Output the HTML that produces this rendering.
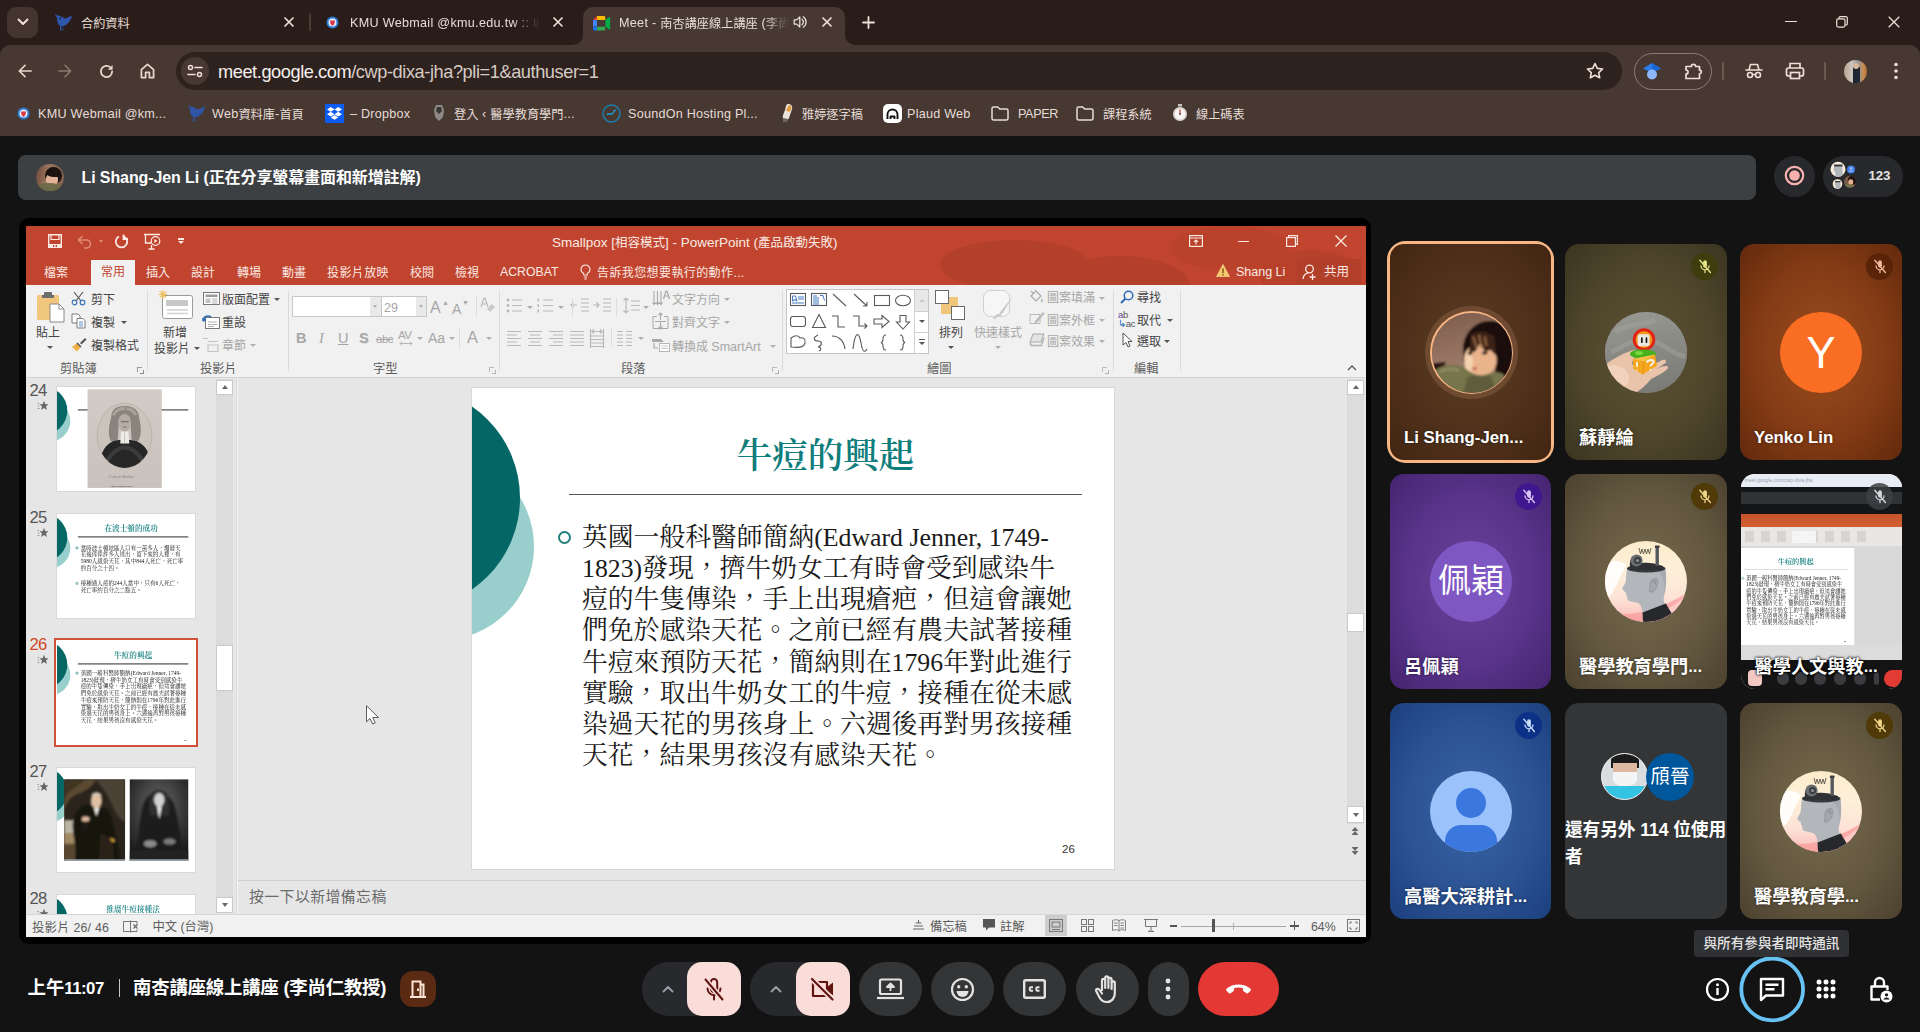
<!DOCTYPE html>
<html lang="zh-Hant">
<head>
<meta charset="utf-8">
<title>Meet - 南杏講座線上講座 (李尚仁教授)</title>
<style>
*{box-sizing:border-box;margin:0;padding:0}
html,body{width:1920px;height:1032px;overflow:hidden;background:#131314}
body{position:relative;font-family:"Liberation Sans","Noto Sans CJK TC",sans-serif;color:#e8eaed}
.abs{position:absolute}
svg{display:block;overflow:visible}
/* ---------- browser chrome ---------- */
#tabstrip{position:absolute;left:0;top:0;width:1920px;height:60px;background:#2a1d19}
#toolbar{position:absolute;left:0;top:45px;width:1920px;height:91px;background:#473832;border-radius:10px 10px 0 0}
.tabtxt{position:absolute;top:13px;font-size:12.6px;line-height:20px;color:#e6dcd6;white-space:nowrap;letter-spacing:.3px}
.c{font-size:12.2px;letter-spacing:0;position:relative;top:.5px}
.bm{position:absolute;top:104px;font-size:12.6px;line-height:20px;color:#e6dcd6;white-space:nowrap;letter-spacing:.25px}
#omni{position:absolute;left:176px;top:52px;width:1446px;height:38px;border-radius:19px;background:#2e221f}
#url{position:absolute;left:218px;top:59.5px;font-size:18.2px;line-height:24px;color:#f6efeb;white-space:nowrap;letter-spacing:-.42px}
/* ---------- meet ---------- */
#pbar{position:absolute;left:18px;top:155px;width:1738px;height:45px;border-radius:8px;background:#3c4043}
#pname{position:absolute;left:81.5px;top:166px;font-size:16px;line-height:24px;font-weight:bold;color:#fff;white-space:nowrap;letter-spacing:-.1px}
#share{position:absolute;left:19px;top:218px;width:1352px;height:726px;border-radius:10px;background:#000}
#ppt{position:absolute;left:26px;top:226px;width:1339.500px;height:711px;background:#e6e6e6;overflow:hidden;font-family:"Liberation Sans","Noto Sans CJK TC",sans-serif}
.tile{position:absolute;width:162px;height:215.500px;border-radius:14px;overflow:hidden}
.tname{position:absolute;left:14px;bottom:10px;font-size:16.8px;line-height:24px;font-weight:bold;color:#fff;white-space:nowrap;text-shadow:0 0 3px rgba(0,0,0,.5)}
.mute{position:absolute;right:9px;top:9px;width:27px;height:27px;border-radius:50%}
.av{position:absolute;left:40px;top:67.500px;width:82px;height:81px;border-radius:50%;overflow:hidden}
.cbtn{position:absolute;top:965px;height:48px;border-radius:24px;background:#333537}

#pw{position:absolute;left:-26px;top:-226px;width:1920px;height:1032px}
.pt{position:absolute;margin-top:1px;font-size:12px;line-height:16px;white-space:nowrap;color:#444}
.pt.w{color:#fbe9e4}
.pt.d{color:#a6a6a6}
.pt.g{color:#5c5c5c}
.sep{position:absolute;top:291px;width:1px;height:80px;background:#dadada}
.dd{position:absolute;width:0;height:0;border-left:3px solid transparent;border-right:3px solid transparent;border-top:3px solid #555}
.dd.d{border-top-color:#b0b0b0}
.lau{position:absolute;top:366.500px;width:5px;height:5px;border-left:1px solid #9a9a9a;border-top:1px solid #9a9a9a}
.lau:after{content:"";position:absolute;left:2px;top:2px;width:3px;height:3px;border-right:1.500px solid #8a8a8a;border-bottom:1.500px solid #8a8a8a}

.serif{font-family:"Liberation Serif","Noto Serif CJK TC","Noto Serif CJK SC",serif}
.slide{position:absolute;width:642px;height:481px;background:#fff;overflow:hidden}
.thumb{position:absolute;left:56.500px;width:138px;height:104px;overflow:hidden;background:#fff;outline:1px solid #d9d9d9}
.thumb .slide{left:0;top:0;transform:scale(.2152);transform-origin:0 0}
.tn{position:absolute;left:29.500px;margin-top:1px;font-size:16.600px;line-height:18px;color:#555;letter-spacing:-.7px}
.deco1{position:absolute;left:-174px;top:-1px;width:222px;height:222px;border-radius:50%;background:#056666}
.deco2{position:absolute;left:-125px;top:65px;width:187px;height:187px;border-radius:50%;background:#98cfcc}
.stitle{position:absolute;left:97px;top:40.500px;width:513px;text-align:center;font-size:35.500px;line-height:54px;font-weight:600;color:#0f7d7c;white-space:nowrap}
.sline{position:absolute;left:97px;top:105.500px;width:513px;height:1.500px;background:#555}
.sbody{position:absolute;left:110px;font-size:25.800px;line-height:31.150px;color:#1a1a1a;white-space:nowrap}
.sbul{position:absolute;left:86.300px;width:13px;height:13px;border-radius:50%;border:2px solid #1f7c7b}
.star{position:absolute;left:37px;width:12px;height:12px}
.sbtn{position:absolute;background:#fff;border:1px solid #c9c9c9}
.thumb .sline{height:5px;top:104px;background:#3a3a3a}
.thumb .sbul{border-width:3px}
</style>
</head>
<body>
<!-- ================= BROWSER CHROME ================= -->
<div id="tabstrip"></div>
<div id="toolbar"></div>
<div id="omni"></div>

<!-- tab search -->
<div class="abs" style="left:7px;top:7px;width:31px;height:31px;border-radius:9px;background:#43342e"></div>
<svg class="abs" style="left:17px;top:18px" width="12" height="8" viewBox="0 0 12 8"><path d="M1.5 1.5L6 6l4.5-4.5" fill="none" stroke="#efdfd8" stroke-width="2" stroke-linecap="round" stroke-linejoin="round"/></svg>
<!-- tab 1 -->
<svg class="abs" style="left:54px;top:13px" width="19" height="19" viewBox="0 0 19 19"><path d="M.5.800L5 3.500C7 3 9 4.300 10.500 6L18 2.500C17.500 6 15.500 9.500 12.500 11.500 11 13 8.500 13.500 7.500 13.200L7.200 17.500H5.800L6.100 12.800C3.500 11.500 3 8 3.500 5.500z" fill="#2f55a8"/><ellipse cx="8" cy="8.300" rx="4.600" ry="4" transform="rotate(25 8 8.300)" fill="#2f55a8"/><circle cx="5" cy="4.800" r="2.200" fill="#2f55a8"/><path d="M9 13l.5 4.500h-1.200z" fill="#2f55a8"/><circle cx="6" cy="5.5" r=".8" fill="#111"/></svg>
<div class="tabtxt" style="left:81px"><span class="c">合約資料</span></div>
<svg class="abs" style="left:284px;top:17px" width="10" height="10" viewBox="0 0 10 10"><path d="M1 1l8 8M9 1l-8 8" stroke="#efdfd8" stroke-width="1.7" stroke-linecap="round"/></svg>
<div class="abs" style="left:309px;top:13px;width:2px;height:18px;background:#4a3a33;border-radius:1px"></div>
<!-- tab 2 -->
<svg class="abs" style="left:326px;top:16px" width="13" height="13" viewBox="0 0 13 13"><circle cx="6.5" cy="6.5" r="6" fill="#2d7bd6"/><circle cx="6.5" cy="6.5" r="4" fill="#e9eef6"/><path d="M4 4.5h5l-.6 3.5L6.5 10 4.600 8z" fill="#d8344a"/></svg>
<div class="tabtxt" style="left:350px;width:190px;overflow:hidden;-webkit-mask-image:linear-gradient(90deg,#000 85%,transparent)">KMU Webmail @kmu.edu.tw :: <span class="c">收信</span></div>
<svg class="abs" style="left:553px;top:17px" width="10" height="10" viewBox="0 0 10 10"><path d="M1 1l8 8M9 1l-8 8" stroke="#efdfd8" stroke-width="1.7" stroke-linecap="round"/></svg>
<!-- active tab -->
<div class="abs" style="left:583px;top:7px;width:261.500px;height:40px;border-radius:10px 10px 0 0;background:#473832"></div>
<svg class="abs" style="left:573px;top:35px" width="10" height="10"><path d="M10 0v10H0A10 10 0 0 0 10 0z" fill="#473832"/></svg>
<svg class="abs" style="left:844.500px;top:35px" width="10" height="10"><path d="M0 0v10h10A10 10 0 0 1 0 0z" fill="#473832"/></svg>
<svg class="abs" style="left:592.800px;top:15.800px" width="17.200" height="14.500" viewBox="0 0 19 16"><path d="M0 4.500L4.500 0v4.500z" fill="#ea4335"/><path d="M4.500 0H12a1.500 1.500 0 0 1 1.500 1.500V4.500h-9z" fill="#fbbc04"/><path d="M0 4.500h4.500v7H0z" fill="#4285f4"/><path d="M0 11.500h4.500V16H1.500A1.500 1.500 0 0 1 0 14.500z" fill="#1a73e8"/><path d="M4.500 11.500h9v3A1.500 1.500 0 0 1 12 16H4.500z" fill="#34a853"/><path d="M13.500 4.500L17.600 1.300c.6-.5 1.400-.1 1.400.7v12c0 .8-.8 1.200-1.400.7l-4.100-3.200z" fill="#00ac47"/><path d="M13.500 4.500v7l-3-3.500z" fill="#00832d"/><rect x="4.500" y="4.500" width="9" height="7" fill="#473832"/></svg>
<div class="tabtxt" style="left:619px;width:170px;overflow:hidden;-webkit-mask-image:linear-gradient(90deg,#000 86%,transparent)">Meet - <span class="c">南杏講座線上講座</span> (<span class="c">李尚仁</span></div>
<svg class="abs" style="left:793px;top:15px" width="15" height="14" viewBox="0 0 15 14"><path d="M1.200 4.900h2.500L6.800 2v10L3.700 9.100H1.200z" fill="none" stroke="#e6dcd6" stroke-width="1.300" stroke-linejoin="round"/><path d="M9 4.200a3.500 3.500 0 0 1 0 5.600M10.300 1.800a6.300 6.300 0 0 1 0 10.400" fill="none" stroke="#e6dcd6" stroke-width="1.300" stroke-linecap="round"/></svg>
<svg class="abs" style="left:822px;top:17px" width="10" height="10" viewBox="0 0 10 10"><path d="M1 1l8 8M9 1l-8 8" stroke="#efdfd8" stroke-width="1.700" stroke-linecap="round"/></svg>
<svg class="abs" style="left:862px;top:16px" width="13" height="13" viewBox="0 0 13 13"><path d="M6.500 1v11M1 6.500h11" stroke="#efdfd8" stroke-width="1.800" stroke-linecap="round"/></svg>
<!-- window controls -->
<div class="abs" style="left:1785px;top:20.500px;width:12px;height:1.200px;background:#efdfd8"></div>
<svg class="abs" style="left:1836px;top:16px" width="12" height="12" viewBox="0 0 12 12"><rect x=".7" y="2.800" width="8.300" height="8.300" rx="1.500" fill="none" stroke="#efdfd8" stroke-width="1.200"/><path d="M3 2.800V2a1.300 1.300 0 0 1 1.300-1.300H10A1.300 1.300 0 0 1 11.300 2v5.700A1.300 1.300 0 0 1 10 9H9" fill="none" stroke="#efdfd8" stroke-width="1.200"/></svg>
<svg class="abs" style="left:1888px;top:16px" width="12" height="12" viewBox="0 0 12 12"><path d="M.7.700l10.600 10.600M11.300.700L.7 11.300" stroke="#efdfd8" stroke-width="1.300"/></svg>
<!-- nav buttons -->
<svg class="abs" style="left:18px;top:64px" width="14" height="14" viewBox="0 0 16 16"><path d="M15 8H2M8 1.500L1.500 8 8 14.500" fill="none" stroke="#e9d6cd" stroke-width="1.900" stroke-linejoin="round" stroke-linecap="round"/></svg>
<svg class="abs" style="left:58px;top:64px" width="14" height="14" viewBox="0 0 16 16"><path d="M1 8h13M8 1.500L14.500 8 8 14.500" fill="none" stroke="#8a7a72" stroke-width="1.800" stroke-linejoin="round" stroke-linecap="round"/></svg>
<svg class="abs" style="left:98.500px;top:63.500px" width="15" height="15" viewBox="0 0 16 16"><path d="M14 8a6 6 0 1 1-1.800-4.300" fill="none" stroke="#e9d6cd" stroke-width="1.900" stroke-linecap="round"/><path d="M14.500 1v5h-5z" fill="#e9d6cd"/></svg>
<svg class="abs" style="left:139.500px;top:63px" width="15" height="16" viewBox="0 0 16 17"><path d="M1.500 7L8 1.500 14.500 7v8.500h-4.500v-5.500h-4v5.500H1.500z" fill="none" stroke="#e9d6cd" stroke-width="1.900" stroke-linejoin="round"/></svg>
<!-- site info -->
<div class="abs" style="left:181px;top:57px;width:28px;height:28px;border-radius:14px;background:#473832"></div>
<svg class="abs" style="left:187px;top:64px" width="16" height="14" viewBox="0 0 16 14"><circle cx="3.500" cy="3.500" r="2" fill="none" stroke="#efdfd8" stroke-width="1.500"/><path d="M8 3.500h7" stroke="#efdfd8" stroke-width="1.600" stroke-linecap="round"/><circle cx="12.500" cy="10.500" r="2" fill="none" stroke="#efdfd8" stroke-width="1.500"/><path d="M1 10.500h7" stroke="#efdfd8" stroke-width="1.600" stroke-linecap="round"/></svg>
<!-- star -->
<svg class="abs" style="left:1586px;top:62px" width="18" height="17" viewBox="0 0 18 17"><path d="M9 1.500l2.300 4.900 5.300.6-3.900 3.600 1 5.200L9 13.200l-4.700 2.600 1-5.200L1.400 7l5.300-.6z" fill="none" stroke="#efdfd8" stroke-width="1.600" stroke-linejoin="round"/></svg>
<!-- extension pill -->
<div class="abs" style="left:1634px;top:53px;width:78px;height:37px;border-radius:18.500px;border:1px solid #8c7e77"></div>
<svg class="abs" style="left:1642px;top:61px" width="20" height="20" viewBox="0 0 20 20"><path d="M1 7.500L10 2l9 5.500-9 4.500z" fill="#2b7de9"/><path d="M10 2l9 5.500-9 4.500z" fill="#1b66d2"/><circle cx="10" cy="13.500" r="5" fill="#8cb7f9"/></svg>
<svg class="abs" style="left:1684px;top:61px" width="19" height="19" viewBox="0 0 19 19"><path d="M2 5.500H7.300a2.200 2.200 0 1 1 4.400 0H15.500V9.200a1.800 1.800 0 1 1 0 3.600V17.500H2V13a2 2 0 1 0 0-4z" fill="none" stroke="#efdfd8" stroke-width="1.700" stroke-linejoin="round"/></svg>
<div class="abs" style="left:1722px;top:62px;width:2px;height:18px;background:#6a5a52;border-radius:1px"></div>
<svg class="abs" style="left:1744px;top:62px" width="20" height="18" viewBox="0 0 20 18"><path d="M2 8h16M5 8l1.500-5.500h7L15 8" fill="none" stroke="#efdfd8" stroke-width="1.600" stroke-linejoin="round" stroke-linecap="round"/><circle cx="6" cy="13" r="2.500" fill="none" stroke="#efdfd8" stroke-width="1.600"/><circle cx="14" cy="13" r="2.500" fill="none" stroke="#efdfd8" stroke-width="1.600"/><path d="M8.500 12.500h3" stroke="#efdfd8" stroke-width="1.400"/></svg>
<svg class="abs" style="left:1785px;top:62px" width="20" height="18" viewBox="0 0 20 18"><path d="M5 6V1.500h10V6" fill="none" stroke="#efdfd8" stroke-width="1.700"/><rect x="1.500" y="6" width="17" height="8" rx="2" fill="none" stroke="#efdfd8" stroke-width="1.700"/><rect x="5.500" y="10.500" width="9" height="6" fill="#473832" stroke="#efdfd8" stroke-width="1.700"/></svg>
<div class="abs" style="left:1824px;top:62px;width:2px;height:18px;background:#6a5a52;border-radius:1px"></div>
<div class="abs" style="left:1844px;top:60px;width:23px;height:23px;border-radius:50%;overflow:hidden;background:linear-gradient(90deg,#b9a48f 0%,#cfc6bd 35%,#8f999f 60%,#c98a4e 85%,#b5703a 100%)"><div class="abs" style="left:9px;top:7px;width:7px;height:16px;background:#1c2733"></div><div class="abs" style="left:9px;top:3px;width:6px;height:6px;border-radius:3px;background:#d9b89b"></div></div>
<svg class="abs" style="left:1894px;top:62px" width="4" height="18" viewBox="0 0 4 18"><circle cx="2" cy="2.500" r="1.800" fill="#efdfd8"/><circle cx="2" cy="9" r="1.800" fill="#efdfd8"/><circle cx="2" cy="15.500" r="1.800" fill="#efdfd8"/></svg>
<!-- bookmarks -->
<svg class="abs" style="left:17px;top:107px" width="13" height="13" viewBox="0 0 13 13"><circle cx="6.500" cy="6.500" r="6" fill="#2d7bd6"/><circle cx="6.500" cy="6.500" r="4" fill="#e9eef6"/><path d="M4 4.500h5l-.6 3.500L6.500 10 4.600 8z" fill="#d8344a"/></svg>
<div class="bm" style="left:38px">KMU Webmail @km...</div>
<svg class="abs" style="left:187px;top:104px" width="19" height="19" viewBox="0 0 19 19"><path d="M.5.800L5 3.500C7 3 9 4.300 10.500 6L18 2.500C17.500 6 15.500 9.500 12.500 11.500 11 13 8.500 13.500 7.500 13.200L7.200 17.500H5.800L6.100 12.800C3.500 11.500 3 8 3.500 5.500z" fill="#2f55a8"/><ellipse cx="8" cy="8.300" rx="4.600" ry="4" transform="rotate(25 8 8.300)" fill="#2f55a8"/><circle cx="5" cy="4.800" r="2.200" fill="#2f55a8"/><path d="M9 13l.5 4.500h-1.200z" fill="#2f55a8"/></svg>
<div class="bm" style="left:212px">Web<span class="c">資料庫</span>-<span class="c">首頁</span></div>
<div class="abs" style="left:325px;top:104px;width:19px;height:19px;background:#0d5cf2"></div>
<svg class="abs" style="left:327px;top:107px" width="15" height="13" viewBox="0 0 15 13"><path d="M3.800 0L0 2.400l3.800 2.400 3.700-2.400zM11.200 0L7.500 2.400l3.700 2.400L15 2.400zM0 7.200l3.800 2.400 3.700-2.400-3.700-2.400zM11.200 4.800L7.500 7.200l3.700 2.400L15 7.200zM3.800 10.400l3.700 2.400 3.700-2.400-3.700-2.400z" fill="#fff"/></svg>
<div class="bm" style="left:350px">– Dropbox</div>
<svg class="abs" style="left:433px;top:104px" width="12" height="18" viewBox="0 0 12 18"><path d="M3 1h6l2 5-1 7-4 4-4-4-1-7z" fill="#8d8a86"/><path d="M4 3h4l1 4-3 3-3-3z" fill="#3a3836"/></svg>
<div class="bm" style="left:454px"><span class="c">登入</span> ‹ <span class="c">醫學教育學門</span>...</div>
<svg class="abs" style="left:602px;top:104px" width="19" height="19" viewBox="0 0 19 19"><circle cx="9.500" cy="9.500" r="8.500" fill="none" stroke="#1c7fb0" stroke-width="1.500"/><path d="M5 11c2-4 4 2 6-2s2-2 3-3" fill="none" stroke="#1c9fd0" stroke-width="1.500"/></svg>
<div class="bm" style="left:628px">SoundOn Hosting Pl...</div>
<svg class="abs" style="left:780px;top:103px" width="14" height="20" viewBox="0 0 14 20"><path d="M8 1c3 0 5 2 4 5l-3 9c-1 3-5 3-6 1-1-3 1-6 2-9S6 1 8 1z" fill="#e9e3da"/><path d="M9 2c2 0 3 2 2 4L9.500 9 6 7.500z" fill="#e39a3b"/><path d="M3 15l5 1-1 3H3z" fill="#6a6660"/></svg>
<div class="bm" style="left:802px"><span class="c">雅婷逐字稿</span></div>
<div class="abs" style="left:883px;top:104px;width:19px;height:19px;border-radius:5px;background:#fff"></div>
<svg class="abs" style="left:886px;top:108px" width="13" height="12" viewBox="0 0 13 12"><path d="M1.500 11V6.500a5 5 0 0 1 10 0V11M4.500 11V8.500h4V11" fill="none" stroke="#111" stroke-width="1.900" stroke-linejoin="round"/></svg>
<div class="bm" style="left:907px">Plaud Web</div>
<svg class="abs" style="left:991px;top:106px" width="18" height="15" viewBox="0 0 18 15"><path d="M1 2.500A1.500 1.500 0 0 1 2.500 1h4.200l2 2H15.500A1.500 1.500 0 0 1 17 4.500v8A1.500 1.500 0 0 1 15.500 14h-13A1.500 1.500 0 0 1 1 12.500z" fill="none" stroke="#e6dcd6" stroke-width="1.500"/></svg>
<div class="bm" style="left:1018px;letter-spacing:-.35px">PAPER</div>
<svg class="abs" style="left:1076px;top:106px" width="18" height="15" viewBox="0 0 18 15"><path d="M1 2.500A1.500 1.500 0 0 1 2.500 1h4.200l2 2H15.500A1.500 1.500 0 0 1 17 4.500v8A1.500 1.500 0 0 1 15.500 14h-13A1.500 1.500 0 0 1 1 12.500z" fill="none" stroke="#e6dcd6" stroke-width="1.500"/></svg>
<div class="bm" style="left:1103px"><span class="c">課程系統</span></div>
<svg class="abs" style="left:1172px;top:104px" width="16" height="18" viewBox="0 0 16 18"><rect x="6" y="0" width="4" height="2.500" fill="#c9c4bf"/><circle cx="8" cy="10" r="7" fill="#d9d6d2"/><circle cx="8" cy="10" r="5.300" fill="#f7f5f3"/><path d="M8 10V5.500" stroke="#c0392b" stroke-width="1.200"/><circle cx="8" cy="10" r="1" fill="#555"/></svg>
<div class="bm" style="left:1196px"><span class="c">線上碼表</span></div>
<div id="url">meet.google.com<span style="color:#d6cbc4">/cwp-dixa-jha?pli=1&amp;authuser=1</span></div>

<!-- ================= MEET ================= -->
<div id="pbar"></div>
<div class="abs" style="left:36px;top:163.500px;width:27.500px;height:27.500px;border-radius:50%;overflow:hidden;background:linear-gradient(100deg,#6d4636 0%,#9a7560 40%,#7c5a4a 100%)">
 <div class="abs" style="left:9px;top:3px;width:17px;height:17px;border-radius:50%;background:#1b120e"></div>
 <div class="abs" style="left:10px;top:9px;width:12px;height:13px;border-radius:45%;background:#e2b197"></div>
 <div class="abs" style="left:10px;top:5px;width:15px;height:8px;border-radius:50% 50% 30% 60%;background:#1b120e"></div>
 <div class="abs" style="left:1px;top:19px;width:26px;height:12px;border-radius:40% 50% 0 0;background:#6f6a48"></div>
</div>
<div id="pname">Li Shang-Jen Li (正在分享螢幕畫面和新增註解)</div>
<div id="share"></div>
<div id="ppt">
<div id="pw">
<!-- title bar -->
<div class="abs" style="left:26px;top:226px;width:1340px;height:59px;background:#c1452e"></div>
<div class="abs" style="left:900px;top:226px;width:466px;height:59px;overflow:hidden;opacity:.55">
 <div class="abs" style="left:40px;top:14px;width:150px;height:50px;border-radius:50%;background:#a93c28"></div>
 <div class="abs" style="left:150px;top:30px;width:140px;height:60px;border-radius:50%;background:#ab3d29"></div>
 <div class="abs" style="left:270px;top:0;width:120px;height:44px;border-radius:50%;background:#b5402a"></div>
 <div class="abs" style="left:360px;top:24px;width:100px;height:50px;border-radius:50%;background:#b03f2a"></div>
</div>
<!-- QAT -->
<svg class="abs" style="left:47.500px;top:233.500px" width="14" height="14" viewBox="0 0 14 14"><path d="M.7.700h12.600v12.600H.7z" fill="none" stroke="#fbe9e4" stroke-width="1.400"/><path d="M3 1v4.500h8V1" fill="none" stroke="#fbe9e4" stroke-width="1.200"/><rect x="1" y="10" width="12" height="3.500" fill="#fbe9e4"/><rect x="5" y="11" width="1.300" height="2" fill="#c1452e"/><rect x="7.700" y="11" width="1.300" height="2" fill="#c1452e"/></svg>
<svg class="abs" style="left:77px;top:235px" width="15" height="13" viewBox="0 0 15 13"><path d="M2 5h7.500a4 4 0 0 1 0 8H7" fill="none" stroke="#e08a76" stroke-width="1.600"/><path d="M5.500 1L1.500 5l4 4" fill="none" stroke="#e08a76" stroke-width="1.600"/></svg>
<div class="dd" style="left:99px;top:240px;border-top-color:#e08a76;border-width:2.500px 2.500px 0 2.500px;border-top-width:3px"></div>
<svg class="abs" style="left:114px;top:234px" width="15" height="15" viewBox="0 0 15 15"><path d="M9.500 2.300a5.700 5.700 0 1 1-4.500.2" fill="none" stroke="#fbe9e4" stroke-width="1.800"/><path d="M9.500 .5v4.500h4.500" fill="none" stroke="#fbe9e4" stroke-width="1.800"/></svg>
<svg class="abs" style="left:144px;top:233px" width="17" height="16" viewBox="0 0 17 16"><path d="M0 1.500h16M1.500 1.500v8.500h6M4.500 16h6M7.500 12v4" fill="none" stroke="#fbe9e4" stroke-width="1.300"/><circle cx="11.500" cy="8" r="4.300" fill="#c1452e" stroke="#fbe9e4" stroke-width="1.200"/><path d="M10.300 6v4l3.200-2z" fill="#fbe9e4"/></svg>
<div class="abs" style="left:178px;top:238px;width:6px;height:1.500px;background:#fbe9e4"></div>
<div class="dd" style="left:178px;top:241px;border-top-color:#fbe9e4"></div>
<div class="pt w" style="left:552px;top:233px;font-size:13.500px;line-height:18px"><span>Smallpox [</span><span style="font-size:12.500px">相容模式</span><span>] - PowerPoint (</span><span style="font-size:12.500px">產品啟動失敗</span><span>)</span></div>
<!-- window controls -->
<svg class="abs" style="left:1189px;top:235px" width="14" height="12" viewBox="0 0 14 12"><rect x=".6" y=".6" width="12.800" height="10.800" fill="none" stroke="#fbe9e4" stroke-width="1.200"/><path d="M.6 3h12.800M7 9.500V5M5 7l2-2 2 2" fill="none" stroke="#fbe9e4" stroke-width="1.100"/></svg>
<div class="abs" style="left:1238px;top:241px;width:11px;height:1.300px;background:#fbe9e4"></div>
<svg class="abs" style="left:1286px;top:235px" width="12" height="12" viewBox="0 0 12 12"><rect x=".6" y="2.600" width="8.800" height="8.800" fill="none" stroke="#fbe9e4" stroke-width="1.200"/><path d="M2.600 2.600V.6h8.800v8.800H9.400" fill="none" stroke="#fbe9e4" stroke-width="1.200"/></svg>
<svg class="abs" style="left:1335px;top:235px" width="12" height="12" viewBox="0 0 12 12"><path d="M.5.500l11 11M11.500.500l-11 11" stroke="#fbe9e4" stroke-width="1.300"/></svg>
<!-- tabs -->
<div class="abs" style="left:91px;top:260px;width:44px;height:26px;background:#f1f1f1"></div>
<div class="pt w" style="left:44px;top:264px">檔案</div>
<div class="pt" style="left:101px;top:263px;color:#c1452e">常用</div>
<div class="pt w" style="left:146px;top:264px">插入</div>
<div class="pt w" style="left:191px;top:264px">設計</div>
<div class="pt w" style="left:237px;top:264px">轉場</div>
<div class="pt w" style="left:282px;top:264px">動畫</div>
<div class="pt w" style="left:327px;top:264px;letter-spacing:.4px">投影片放映</div>
<div class="pt w" style="left:410px;top:264px">校閱</div>
<div class="pt w" style="left:455px;top:264px">檢視</div>
<div class="pt w" style="left:500px;top:262.500px;font-size:12.300px">ACROBAT</div>
<svg class="abs" style="left:580px;top:264px" width="11" height="16" viewBox="0 0 11 16"><path d="M5.500 1a4.300 4.300 0 0 1 2.300 8c-.5.400-.6 1-.6 2H3.800c0-1-.1-1.600-.6-2A4.300 4.300 0 0 1 5.500 1zM3.800 13h3.400M4.300 15h2.400" fill="none" stroke="#fbe9e4" stroke-width="1.100"/></svg>
<div class="pt w" style="left:597px;top:264px;letter-spacing:.4px">告訴我您想要執行的動作...</div>
<svg class="abs" style="left:1216px;top:264px" width="14" height="13" viewBox="0 0 14 13"><path d="M7 .5L13.500 12.500H.5z" fill="#f6c86a" stroke="#f9e0a8" stroke-width=".6"/><rect x="6.300" y="4.500" width="1.400" height="4.500" fill="#7a4a10"/><rect x="6.300" y="10" width="1.400" height="1.400" fill="#7a4a10"/></svg>
<div class="pt w" style="left:1236px;top:263px;font-size:12.500px">Shang Li</div>
<div class="abs" style="left:1297px;top:259px;width:64px;height:25px;background:#b23f29"></div>
<svg class="abs" style="left:1302px;top:264px" width="15" height="16" viewBox="0 0 15 16"><circle cx="7.500" cy="5" r="3.800" fill="none" stroke="#fbe9e4" stroke-width="1.300"/><path d="M1 15c.5-4 3-5.500 5-5.800M10.500 10v6M7.500 13h6" fill="none" stroke="#fbe9e4" stroke-width="1.300"/></svg>
<div class="pt w" style="left:1324px;top:263px;font-size:12.500px">共用</div>
<!-- ribbon body -->
<div class="abs" style="left:26px;top:285px;width:1340px;height:92px;background:#f1f1f1"></div>
<div class="abs" style="left:26px;top:377px;width:1340px;height:1px;background:#d4d4d4"></div>
<div class="sep" style="left:147px"></div><div class="sep" style="left:288px"></div><div class="sep" style="left:499px"></div><div class="sep" style="left:782px"></div><div class="sep" style="left:1113px"></div><div class="sep" style="left:1180px"></div>
<!-- clipboard -->
<svg class="abs" style="left:36px;top:291px" width="30" height="32" viewBox="0 0 30 32"><rect x="1" y="4" width="22" height="25" rx="1.500" fill="#f0c67c"/><rect x="8" y="1" width="8" height="5" rx="1" fill="#6e6e6e"/><rect x="6" y="4" width="12" height="3" fill="#6e6e6e"/><path d="M14 13h9l5 5v13H14z" fill="#fff" stroke="#8a8a8a" stroke-width="1"/><path d="M23 13v5h5" fill="none" stroke="#8a8a8a" stroke-width="1"/></svg>
<div class="pt" style="left:36px;top:324px">貼上</div>
<div class="dd" style="left:47px;top:346px"></div>
<svg class="abs" style="left:71px;top:291px" width="15" height="15" viewBox="0 0 15 15"><path d="M3 1l7 9M12 1L5 10" stroke="#5a5a5a" stroke-width="1.200"/><circle cx="3.500" cy="11.500" r="2.300" fill="none" stroke="#3b73b9" stroke-width="1.200"/><circle cx="11.500" cy="11.500" r="2.300" fill="none" stroke="#3b73b9" stroke-width="1.200"/></svg>
<div class="pt" style="left:91px;top:291px">剪下</div>
<svg class="abs" style="left:71px;top:313px" width="15" height="16" viewBox="0 0 15 16"><path d="M1 1h6l2 2v7H1z" fill="#fff" stroke="#7a7a7a"/><path d="M6 5.500h6l2 2V15H6z" fill="#fff" stroke="#7a7a7a"/><path d="M8 9h4M8 11h4M8 13h4" stroke="#3b73b9" stroke-width=".8"/></svg>
<div class="pt" style="left:91px;top:314px">複製</div>
<div class="dd" style="left:121px;top:321px"></div>
<svg class="abs" style="left:71px;top:337px" width="16" height="15" viewBox="0 0 16 15"><path d="M9 6l5-5 1.500 1.500-5 5z" fill="#555"/><path d="M1 10l5-4 4 4-4 4.500z" fill="#f0b04a"/><path d="M6 6l4 4" stroke="#555" stroke-width="1.500"/></svg>
<div class="pt" style="left:91px;top:337px">複製格式</div>
<div class="pt g" style="left:60px;top:359.5px;font-size:12.300px">剪貼簿</div>
<div class="lau" style="left:137px"></div>
<!-- slides -->
<svg class="abs" style="left:158px;top:290px" width="36" height="30" viewBox="0 0 36 30"><rect x="4.500" y="5.500" width="30" height="23" rx="2" fill="#fff" stroke="#9a9a9a"/><rect x="8" y="10" width="22" height="6" fill="#c8c8c8"/><path d="M9 20h21M9 23.500h21" stroke="#d0d0d0" stroke-width="1.500"/><path d="M5 0v9M.5 4.500h9M1.800 1.300l6.400 6.400M8.200 1.300L1.800 7.700" stroke="#efc05a" stroke-width="1.200"/></svg>
<div class="pt" style="left:163px;top:324px">新增</div>
<div class="pt" style="left:154px;top:340px">投影片</div>
<div class="dd" style="left:194px;top:347px"></div>
<svg class="abs" style="left:203px;top:292px" width="17" height="13" viewBox="0 0 17 13"><rect x=".5" y=".5" width="16" height="12" fill="#fff" stroke="#777"/><rect x="2.500" y="2.500" width="12" height="2.500" fill="#9a9a9a"/><rect x="2.500" y="6.500" width="5" height="4.500" fill="#c4c4c4"/><path d="M9 7h5.500M9 9h5.500M9 11h5.500" stroke="#9a9a9a" stroke-width=".8"/></svg>
<div class="pt" style="left:222px;top:291px">版面配置</div>
<div class="dd" style="left:274px;top:298px"></div>
<svg class="abs" style="left:202px;top:314px" width="18" height="15" viewBox="0 0 18 15"><rect x="3.500" y="3.500" width="14" height="11" fill="#fff" stroke="#777"/><path d="M6 8h9M6 10.500h9M6 12.500h6" stroke="#aaa" stroke-width=".9"/><path d="M1 7a5 5 0 0 1 8-4" fill="none" stroke="#2d6bb5" stroke-width="1.600"/><path d="M0 4l1.500 4 3-2.500z" fill="#2d6bb5"/></svg>
<div class="pt" style="left:222px;top:314px">重設</div>
<svg class="abs" style="left:203px;top:337px" width="16" height="15" viewBox="0 0 16 15"><path d="M0 1.500h5M5 4.500h10M5 8h10v6.500H5z" fill="none" stroke="#c4c4c4" stroke-width="1.200"/></svg>
<div class="pt d" style="left:222px;top:337px">章節</div>
<div class="dd d" style="left:250px;top:344px"></div>
<div class="pt g" style="left:200px;top:359.5px;font-size:12.300px">投影片</div>
<!-- font -->
<div class="abs" style="left:292px;top:296px;width:90px;height:21px;background:#fff;border:1px solid #c8c8c8"></div>
<div class="abs" style="left:370px;top:297px;width:11px;height:19px;background:#e9e9e9"></div>
<div class="dd d" style="left:373px;top:305px;border-width:3px 2.500px 0 2.500px"></div>
<div class="abs" style="left:381px;top:296px;width:46px;height:21px;background:#fff;border:1px solid #c8c8c8"></div>
<div class="abs" style="left:416px;top:297px;width:10px;height:19px;background:#e9e9e9"></div>
<div class="dd d" style="left:418.500px;top:305px;border-width:3px 2.500px 0 2.500px"></div>
<div class="pt d" style="left:384px;top:299px;font-size:12.500px">29</div>
<div class="pt d" style="left:430px;top:298px;font-size:16px;line-height:18px">A</div><div class="pt d" style="left:442px;top:294px;font-size:7px">▲</div>
<div class="pt d" style="left:452px;top:299px;font-size:14px;line-height:18px">A</div><div class="pt d" style="left:462px;top:294px;font-size:7px">▼</div>
<div class="abs" style="left:476px;top:296px;width:1px;height:20px;background:#dcdcdc"></div>
<svg class="abs" style="left:480px;top:297px" width="15" height="16" viewBox="0 0 15 16"><path d="M1 10L4 1h1l3 9M2 7h5" fill="none" stroke="#b9b9b9" stroke-width="1.200"/><path d="M7 12l5-5 3 3-5 5z" fill="#c9c9c9"/></svg>
<div class="pt d" style="left:296px;top:328px;font-size:14.500px;font-weight:bold;line-height:18px">B</div>
<div class="pt d" style="left:319px;top:328px;font-size:14.500px;font-style:italic;line-height:18px;font-family:'Liberation Serif',serif">I</div>
<div class="pt d" style="left:338px;top:328px;font-size:14.500px;text-decoration:underline;line-height:18px">U</div>
<div class="pt d" style="left:359px;top:328px;font-size:14.500px;font-weight:bold;line-height:18px;text-shadow:1px 1px 0 #ddd">S</div>
<div class="pt d" style="left:376px;top:330px;font-size:11.500px;text-decoration:line-through;line-height:16px;letter-spacing:-.5px">abc</div>
<div class="pt d" style="left:398px;top:327px;font-size:11.500px;line-height:14px;letter-spacing:-.5px">AV</div>
<svg class="abs" style="left:399px;top:341px" width="14" height="5" viewBox="0 0 14 5"><path d="M1 2.500h12M3 .5l-2 2 2 2M11 .5l2 2-2 2" fill="none" stroke="#b5b5b5" stroke-width="1"/></svg>
<div class="dd d" style="left:417px;top:337px"></div>
<div class="pt d" style="left:428px;top:328px;font-size:14px;line-height:18px">Aa</div>
<div class="dd d" style="left:449px;top:337px"></div>
<div class="abs" style="left:459px;top:328px;width:1px;height:20px;background:#dcdcdc"></div>
<div class="pt d" style="left:467px;top:326px;font-size:16.500px;line-height:20px">A</div>
<div class="dd d" style="left:486px;top:337px"></div>
<div class="pt g" style="left:373px;top:359.5px;font-size:12.300px">字型</div>
<div class="lau" style="left:489px;opacity:.6"></div>
<!-- paragraph -->
<svg class="abs" style="left:505px;top:297px" width="170" height="58" viewBox="0 0 170 58">
 <g stroke="#b9b9b9" stroke-width="1.200" fill="none">
  <path d="M7 3h10M7 8.500h10M7 14h10"/><path d="M38 3h10M38 8.500h10M38 14h10"/>
  <path d="M76 2h8M76 6h8M76 10h8M76 14h8M72 8h-6M68.500 5.500L66 8l2.500 2.500"/>
  <path d="M98 2h8M98 6h8M98 10h8M98 14h8M88 8h6M91.500 5.500L94 8l-2.500 2.500"/>
  <path d="M126 4h9M126 8.500h9M126 13h9M121 1v15M118.500 3.500L121 1l2.500 2.500M118.500 13.500L121 16l2.500-2.500"/>
  <path d="M2 34.500h14M2 38h10M2 41.500h14M2 45h10M2 48.500h14"/>
  <path d="M23 34.500h14M25 38h10M23 41.500h14M25 45h10M23 48.500h14"/>
  <path d="M44 34.500h14M48 38h10M44 41.500h14M48 45h10M44 48.500h14"/>
  <path d="M65 34.500h14M65 38h14M65 41.500h14M65 45h14M65 48.500h14"/>
  <path d="M86 39h12M86 42.500h12M86 46h12M86 49.500h12M85.500 32v19M98.500 32v19M87 34.500h10M89 32.500l-2 2 2 2M95 32.500l2 2-2 2"/>
  <path d="M112 34.500h6M121 34.500h6M112 38h6M121 38h6M112 41.500h6M121 41.500h6M112 45h6M121 45h6M112 48.500h6M121 48.500h6"/>
 </g>
 <g fill="#b9b9b9"><circle cx="3" cy="3" r="1.400"/><circle cx="3" cy="8.500" r="1.400"/><circle cx="3" cy="14" r="1.400"/><rect x="32.500" y="1.500" width="1.500" height="3"/><rect x="32.500" y="7" width="1.500" height="3"/><rect x="32.500" y="12.500" width="1.500" height="3"/></g>
</svg>
<div class="dd d" style="left:527px;top:306px"></div><div class="dd d" style="left:558px;top:306px"></div><div class="dd d" style="left:643px;top:306px"></div><div class="dd d" style="left:638px;top:337px"></div>
<div class="abs" style="left:572px;top:298px;width:1px;height:18px;background:#dcdcdc"></div><div class="abs" style="left:616px;top:298px;width:1px;height:18px;background:#dcdcdc"></div><div class="abs" style="left:611px;top:329px;width:1px;height:18px;background:#dcdcdc"></div>
<svg class="abs" style="left:652px;top:290px" width="18" height="17" viewBox="0 0 18 17"><path d="M2 1v13M5.500 1v13M9 1v13M.5 12.500L2 14.500l1.500-2M4 12.500l1.500 2 1.500-2M7.500 12.500l1.500 2 1.500-2" fill="none" stroke="#a9a9a9" stroke-width="1.100"/><path d="M11.500 9L14 1h1l2.500 8M12.500 6h4" fill="none" stroke="#a9a9a9" stroke-width="1.200"/></svg>
<div class="pt d" style="left:672px;top:291px">文字方向</div><div class="dd d" style="left:724px;top:298px"></div>
<svg class="abs" style="left:652px;top:313px" width="17" height="17" viewBox="0 0 17 17"><path d="M5 3.500H1v12h15v-12h-4" fill="none" stroke="#a9a9a9"/><path d="M8.500 0v7M6.500 2L8.500 0l2 2M8.500 16V9.500M6.500 13.500l2 2.500 2-2.500M3 8.500h11" fill="none" stroke="#a9a9a9" stroke-width="1.100"/></svg>
<div class="pt d" style="left:672px;top:314px">對齊文字</div><div class="dd d" style="left:724px;top:321px"></div>
<svg class="abs" style="left:652px;top:338px" width="18" height="14" viewBox="0 0 18 14"><path d="M0 1h9l3 3-3 0H0z" fill="#a9a9a9"/><rect x="7.500" y="5.500" width="10" height="8" fill="#fff" stroke="#b5b5b5"/><path d="M9 8h7M9 10.500h7" stroke="#c4c4c4"/><path d="M2 5v5h4" fill="none" stroke="#a9a9a9" stroke-width="1.200"/></svg>
<div class="pt d" style="left:672px;top:338px">轉換成 <span style="font-size:12.500px">SmartArt</span></div><div class="dd d" style="left:770px;top:345px"></div>
<div class="pt g" style="left:621px;top:359.5px;font-size:12.300px">段落</div>
<div class="lau" style="left:772px;opacity:.6"></div>
<!-- drawing -->
<div class="abs" style="left:786px;top:289px;width:143px;height:65px;background:#fff;border:1px solid #c6c6c6"></div>
<div class="abs" style="left:914px;top:290px;width:14px;height:63px;background:#fff;border-left:1px solid #d0d0d0"></div>
<div class="abs" style="left:915px;top:290px;width:13px;height:21px;background:#e8e8e8"></div>
<div class="abs" style="left:915px;top:311px;width:13px;height:1px;background:#d0d0d0"></div><div class="abs" style="left:915px;top:332px;width:13px;height:1px;background:#d0d0d0"></div>
<div class="dd d" style="left:918.500px;top:299px;transform:rotate(180deg);border-top-color:#c9c9c9"></div>
<div class="dd" style="left:918.500px;top:320px"></div>
<div class="abs" style="left:918.500px;top:339px;width:6px;height:1.200px;background:#555"></div><div class="dd" style="left:918.500px;top:342px"></div>
<svg class="abs" style="left:788px;top:291px" width="126" height="62" viewBox="0 0 126 62">
 <g fill="none" stroke="#5a5a5a" stroke-width="1.100">
  <rect x="2.500" y="2.500" width="15" height="12"/><rect x="23.500" y="2.500" width="15" height="12"/>
  <path d="M45 3l13 12"/><path d="M66 3l13 12M79 15v-4M79 15h-4"/>
  <rect x="86.500" y="4.500" width="15" height="10"/><ellipse cx="115" cy="9.500" rx="7.500" ry="5.200"/>
  <rect x="2.500" y="25.500" width="15" height="10" rx="2.500"/><path d="M31 23.500l6.500 13h-13z"/>
  <path d="M44 25h6v11h7"/><path d="M65 25h6v10h8M76.500 32.500L79 35l-2.500 2.500"/>
  <path d="M86 28h8v-3.500l7 6-7 6V33h-8z"/><path d="M112 24.500h6v6.500h3.500l-6.500 7-6.500-7h3.500z"/>
  <path d="M3 47c4-3 8-3 9 0 3-1 6 1 5 5s-4 5-14 4z"/><path d="M30 44c-6 3-4 6 0 6s5 4 0 6c4 0 3 3 1 4"/>
  <path d="M44 45c7 0 12 5 13 13"/><path d="M65 58c2-18 6-18 8-6s5 8 6 6"/>
  <path d="M98 44c-3 0-3 2-3 4s0 3-2 3.500c2 .5 2 1.500 2 3.500s0 4 3 4"/><path d="M112 44c3 0 3 2 3 4s0 3 2 3.500c-2 .5-2 1.500-2 3.500s0 4-3 4"/>
 </g>
 <path d="M4.500 5h3l1.500 5h-1l-.4-1.300H5.900L5.500 10h-1zM10 6h6M10 8h6M4 12h12" stroke="#2d6bb5" stroke-width=".9" fill="none"/>
 <path d="M32 4.500h3l1.500 5M26 4v10M28 4v10M30 6v8" stroke="#2d6bb5" stroke-width=".9" fill="none"/>
</svg>
<svg class="abs" style="left:934px;top:289px" width="33" height="33" viewBox="0 0 33 33"><rect x="7" y="8" width="17" height="17" fill="#f0c67c"/><rect x="1.500" y="1.500" width="13" height="13" fill="#fff" stroke="#6a6a6a"/><rect x="17.500" y="17.500" width="13" height="13" fill="#fff" stroke="#6a6a6a"/></svg>
<div class="pt" style="left:939px;top:324px">排列</div><div class="dd" style="left:948px;top:346px"></div>
<svg class="abs" style="left:982px;top:289px" width="34" height="34" viewBox="0 0 34 34"><rect x="1.500" y="1.500" width="26" height="26" rx="7" fill="#f6f6f6" stroke="#cfcfcf"/><path d="M31 7L19 22l-3 5 5-3z" fill="#c9c9c9"/><path d="M12 30c2-4 5-5 7-3" fill="none" stroke="#c9c9c9" stroke-width="2"/></svg>
<div class="pt d" style="left:974px;top:324px">快速樣式</div><div class="dd d" style="left:995px;top:346px"></div>
<svg class="abs" style="left:1029px;top:289px" width="15" height="15" viewBox="0 0 15 15"><path d="M6 1l6 6-5 5-5-5 4-4M2 2l3 3" fill="none" stroke="#a9a9a9" stroke-width="1.200"/><path d="M13 9c1 2 1.500 3 .5 4s-2 0-1.500-1.500z" fill="#b9b9b9"/></svg>
<div class="pt d" style="left:1047px;top:289px">圖案填滿</div><div class="dd d" style="left:1099px;top:297px"></div>
<svg class="abs" style="left:1029px;top:311px" width="16" height="15" viewBox="0 0 16 15"><path d="M1 3.500h10v9H1z" fill="none" stroke="#b9b9b9"/><path d="M14 1L6 10l-1 3 3-1.500L15.500 2.500z" fill="#b9b9b9"/></svg>
<div class="pt d" style="left:1047px;top:312px">圖案外框</div><div class="dd d" style="left:1099px;top:319px"></div>
<svg class="abs" style="left:1028px;top:333px" width="18" height="14" viewBox="0 0 18 14"><path d="M5 1h11l-3 8H2z" fill="#e3e3e3" stroke="#a9a9a9"/><path d="M2 9l1 3.500h10.500l2.500-8" fill="none" stroke="#b5b5b5" stroke-width="1.500"/></svg>
<div class="pt d" style="left:1047px;top:333px">圖案效果</div><div class="dd d" style="left:1099px;top:340px"></div>
<div class="pt g" style="left:927px;top:359.5px;font-size:12.300px">繪圖</div>
<div class="lau" style="left:1102px;opacity:.6"></div>
<!-- editing -->
<svg class="abs" style="left:1120px;top:290px" width="14" height="14" viewBox="0 0 14 14"><circle cx="8.500" cy="5.500" r="4.300" fill="none" stroke="#2d6bb5" stroke-width="1.500"/><path d="M5.500 8.500L1 13" stroke="#2d6bb5" stroke-width="2"/></svg>
<div class="pt" style="left:1137px;top:289px">尋找</div>
<div class="pt" style="left:1118px;top:309px;font-size:9.500px;line-height:9px;letter-spacing:-.3px;color:#555"><span style="color:#6a3fa0">a</span>b<br><span style="color:#2d6bb5">↳</span>ac</div>
<div class="pt" style="left:1137px;top:312px">取代</div><div class="dd" style="left:1167px;top:319px"></div>
<svg class="abs" style="left:1122px;top:332px" width="11" height="16" viewBox="0 0 11 16"><path d="M1 1v12l3-2.500 2 4.500 2-1-2-4.500h4z" fill="#fff" stroke="#555" stroke-width="1"/></svg>
<div class="pt" style="left:1137px;top:333px">選取</div><div class="dd" style="left:1164px;top:340px"></div>
<div class="pt g" style="left:1134px;top:359.5px;font-size:12.300px">編輯</div>
<svg class="abs" style="left:1347px;top:365px" width="10" height="6" viewBox="0 0 10 6"><path d="M1 5l4-4 4 4" fill="none" stroke="#555" stroke-width="1.300"/></svg>
<!-- workspace -->
<div class="abs" style="left:26px;top:378px;width:1340px;height:535px;background:#e6e6e6"></div>
<div class="abs" style="left:237px;top:378px;width:1px;height:535px;background:#f4f4f4"></div>
<div class="abs" style="left:236px;top:378px;width:1px;height:535px;background:#dadada"></div>
<!-- thumbs -->
<div class="tn" style="top:381px">24</div><svg class="star" style="top:400px" viewBox="0 0 12 12"><path d="M7 .8l1.300 3.500h3.200L9 6.400l1 3.600L7 7.900 4 10l1-3.600L2.500 4.300h3.200z" fill="#666"/><path d="M.5 3.500h1.500M.8 6h1.500M.5 8.500h2" stroke="#888" stroke-width=".8"/></svg>
<div class="thumb" style="top:386.500px"><div class="slide serif"><div class="deco2"></div><div class="deco1"></div><div class="sline"></div><div class="abs" style="left:142px;top:11px;width:345px;height:458px;background:linear-gradient(180deg,#d3ccc6,#c9c2bc)"><svg class="abs" style="left:0;top:0" width="345" height="458" viewBox="0 0 345 458"><defs><filter id="pb24" x="-5%" y="-5%" width="110%" height="110%"><feGaussianBlur stdDeviation="3.500"/></filter><clipPath id="ov24"><ellipse cx="172" cy="215" rx="126" ry="150"/></clipPath></defs><ellipse cx="172" cy="215" rx="127" ry="151" fill="#cbc4bd" stroke="#aaa39c" stroke-width="2.500"/><g clip-path="url(#ov24)" filter="url(#pb24)"><path d="M60 370C50 290 90 250 130 235L215 235C260 250 300 290 290 370z" fill="#262626"/><path d="M110 130C110 90 140 75 172 78 205 75 240 92 240 135 250 170 252 215 235 240L205 238 200 160 145 160 140 238 108 240C92 210 100 165 110 130z" fill="#8a847e"/><path d="M120 120c10-25 40-35 55-30M225 120c-10-20-30-30-45-30" stroke="#a9a39c" stroke-width="14" fill="none"/><ellipse cx="172" cy="155" rx="30" ry="42" fill="#b5aca3"/><path d="M155 150h36M165 175h16" stroke="#7a736c" stroke-width="5"/><path d="M156 196h34l4 56h-42z" fill="#eeebe6"/><path d="M172 200v50" stroke="#b5b0aa" stroke-width="3"/><path d="M90 330c30-40 60-60 82-60s55 20 85 60" stroke="#3a3a3a" stroke-width="20" fill="none"/></g></svg>
<div class="abs" style="left:100px;top:396px;width:150px;font-size:20px;font-style:italic;color:#8a837c;white-space:nowrap">Cotton Mather</div><div class="abs" style="left:108px;top:444px;width:150px;font-size:9px;color:#555;white-space:nowrap;font-weight:bold">Source: Wellcome Library</div></div></div></div>
<div class="tn" style="top:508px">25</div><svg class="star" style="top:527px" viewBox="0 0 12 12"><path d="M7 .8l1.300 3.500h3.200L9 6.400l1 3.600L7 7.900 4 10l1-3.600L2.500 4.300h3.200z" fill="#666"/><path d="M.5 3.500h1.500M.8 6h1.500M.5 8.500h2" stroke="#888" stroke-width=".8"/></svg>
<div class="thumb" style="top:513.500px"><div class="slide serif"><div class="deco2"></div><div class="deco1"></div><div class="stitle" style="left:88px">在波士頓的成功</div><div class="sline"></div><div class="sbul" style="top:151px"></div><div class="sbody" style="top:141px">當時波士頓地區人口有一萬多人，爆發天<br>花後倖倖許多人逃出，留下來的人裡，有<br>5980人感染天花，其中844人死亡，死亡率<br>約百分之十四。</div><div class="sbul" style="top:316px"></div><div class="sbody" style="top:305.500px">接種過人痘的244人當中，只有6人死亡，<br>死亡率約百分之二點五。</div></div></div>
<div class="tn" style="top:635px;color:#d24726">26</div><svg class="star" style="top:654px" viewBox="0 0 12 12"><path d="M7 .8l1.300 3.500h3.200L9 6.400l1 3.600L7 7.900 4 10l1-3.600L2.500 4.300h3.200z" fill="#666"/><path d="M.5 3.500h1.500M.8 6h1.500M.5 8.500h2" stroke="#888" stroke-width=".8"/></svg>
<div class="abs" style="left:53.500px;top:638px;width:144px;height:109px;border:2px solid #d0503a;background:#fff"></div>
<div class="thumb" style="top:640.500px;outline:none"><div class="slide serif"><div class="deco2"></div><div class="deco1"></div><div class="stitle">牛痘的興起</div><div class="sline"></div><div class="sbul" style="top:143px"></div><div class="sbody" style="top:134px">英國一般科醫師簡納(Edward Jenner, 1749-<br>1823)發現，擠牛奶女工有時會受到感染牛<br>痘的牛隻傳染，手上出現瘡疤，但這會讓她<br>們免於感染天花。之前已經有農夫試著接種<br>牛痘來預防天花，簡納則在1796年對此進行<br>實驗，取出牛奶女工的牛痘，接種在從未感<br>染過天花的男孩身上。六週後再對男孩接種<br>天花，結果男孩沒有感染天花。</div><div class="abs" style="left:590px;top:454px;font-size:11.500px;line-height:14px;color:#333;font-family:'Liberation Sans',sans-serif">26</div></div></div>
<div class="tn" style="top:762px">27</div><svg class="star" style="top:781px" viewBox="0 0 12 12"><path d="M7 .8l1.300 3.500h3.200L9 6.400l1 3.600L7 7.900 4 10l1-3.600L2.500 4.300h3.200z" fill="#666"/><path d="M.5 3.500h1.500M.8 6h1.500M.5 8.500h2" stroke="#888" stroke-width=".8"/></svg>
<div class="thumb" style="top:767.500px"><div class="slide serif"><div class="deco2"></div><div class="deco1"></div><svg class="abs" style="left:33px;top:52px" width="578" height="380" viewBox="0 0 578 380"><defs><filter id="pb" x="-5%" y="-5%" width="110%" height="110%"><feGaussianBlur stdDeviation="5"/></filter><clipPath id="pc1"><rect width="284" height="380"/></clipPath><clipPath id="pc2"><rect x="304" width="274" height="380"/></clipPath><radialGradient id="pg2" cx=".5" cy=".35" r=".7"><stop offset="0" stop-color="#6e6e6e"/><stop offset=".55" stop-color="#3c3c3c"/><stop offset="1" stop-color="#1a1a1a"/></radialGradient></defs>
<g clip-path="url(#pc1)"><rect width="284" height="380" fill="#2a241c"/><g filter="url(#pb)"><path d="M0 0h150c-20 40-60 60-90 70s-50 40-60 80z" fill="#5b4a30"/><path d="M0 0h100c-30 30-70 40-100 90z" fill="#3f3424"/><path d="M150 0h134v200c-40-20-60-80-80-120s-40-50-54-80z" fill="#4a4234"/><path d="M0 190h90v130H0z" fill="#b9b4a4"/><path d="M0 250h80v70H0z" fill="#a08a66"/><path d="M0 300h100v80H0z" fill="#5a4630"/><path d="M60 150c20-30 60-40 90-30s60 20 70 60 30 100 40 200H50c10-60-10-120-10-160s10-50 20-70z" fill="#15120e"/><ellipse cx="150" cy="100" rx="26" ry="34" fill="#e0bfa2"/><path d="M125 80c5-25 45-25 52 0-10-10-40-10-52 0z" fill="#cfc8bc"/><path d="M138 132l12 40 14-40z" fill="#f0ece4"/><path d="M80 170c10-20 40-20 40 10s-10 50-20 60-30-40-20-70z" fill="#1f1a14"/><ellipse cx="100" cy="185" rx="18" ry="12" fill="#dcb89a"/><ellipse cx="215" cy="285" rx="20" ry="10" fill="#c79a3a"/><path d="M170 250c20 10 50 20 60 60v70h-70z" fill="#2a2118"/></g><rect y="372" width="284" height="8" fill="#9aa4aa"/></g>
<g clip-path="url(#pc2)"><rect x="304" width="274" height="380" fill="url(#pg2)"/><g filter="url(#pb)"><path d="M360 150c10-60 40-90 80-90s70 40 80 90 30 130 30 230H340c0-100 10-170 20-230z" fill="#1c1c1c"/><path d="M400 80c0-40 80-40 84 0 6 40 10 70 0 90h-84c-10-30-4-60 0-90z" fill="#2d2d2d"/><ellipse cx="442" cy="96" rx="24" ry="32" fill="#d2d2d2"/><path d="M432 126l10 60 12-60z" fill="#e8e8e8"/><ellipse cx="400" cy="300" rx="30" ry="16" fill="#8a8a8a"/><ellipse cx="490" cy="290" rx="28" ry="14" fill="#7a7a7a"/><path d="M304 330h274v50H304z" fill="#222"/></g><rect x="304" y="372" width="274" height="8" fill="#9aa4aa"/></g></svg></div></div>
<div class="tn" style="top:889px">28</div><svg class="star" style="top:908px" viewBox="0 0 12 12"><path d="M7 .8l1.300 3.500h3.200L9 6.400l1 3.600L7 7.900 4 10l1-3.600L2.500 4.300h3.200z" fill="#666"/><path d="M.5 3.500h1.500M.8 6h1.500M.5 8.500h2" stroke="#888" stroke-width=".8"/></svg>
<div class="thumb" style="top:894.500px;height:19px"><div class="slide serif"><div class="deco2"></div><div class="deco1"></div><div class="stitle">推廣牛痘接種法</div><div class="sline"></div></div></div>
<!-- thumb scrollbar -->
<div class="abs" style="left:216px;top:379px;width:17px;height:534px;background:#dcdcdc"></div>
<div class="sbtn" style="left:216px;top:380px;width:17px;height:15px"></div><div class="dd" style="left:221.500px;top:385px;transform:rotate(180deg);border-top-color:#666;border-width:4px 3.500px 0 3.500px"></div>
<div class="sbtn" style="left:216px;top:645px;width:17px;height:46px"></div>
<div class="sbtn" style="left:216px;top:897px;width:17px;height:15.500px"></div><div class="dd" style="left:221.500px;top:903px;border-top-color:#666;border-width:4px 3.500px 0 3.500px"></div>
<!-- main slide -->
<div class="abs" style="left:471px;top:387px;width:644px;height:483px;background:#d8d8d8"></div>
<div style="position:absolute;left:472px;top:388px"><div class="slide serif"><div class="deco2"></div><div class="deco1"></div><div class="stitle">牛痘的興起</div><div class="sline"></div><div class="sbul" style="top:143px"></div><div class="sbody" style="top:134px">英國一般科醫師簡納(Edward Jenner, 1749-<br>1823)發現，擠牛奶女工有時會受到感染牛<br>痘的牛隻傳染，手上出現瘡疤，但這會讓她<br>們免於感染天花。之前已經有農夫試著接種<br>牛痘來預防天花，簡納則在1796年對此進行<br>實驗，取出牛奶女工的牛痘，接種在從未感<br>染過天花的男孩身上。六週後再對男孩接種<br>天花，結果男孩沒有感染天花。</div><div class="abs" style="left:590px;top:454px;font-size:11.500px;line-height:14px;color:#333;font-family:'Liberation Sans',sans-serif">26</div></div></div>
<svg class="abs" style="left:366px;top:705px" width="14" height="20" viewBox="0 0 14 20"><path d="M.5.800V16.800L4 13.500 6.600 19 9.200 17.800 6.800 12.500H12.500z" fill="#fff" stroke="#5a5a5a" stroke-width="1" stroke-linejoin="round"/></svg>
<!-- right scrollbar -->
<div class="abs" style="left:1347px;top:379px;width:17px;height:445px;background:#dcdcdc"></div>
<div class="sbtn" style="left:1347px;top:380px;width:17px;height:15px"></div><div class="dd" style="left:1352.500px;top:385px;transform:rotate(180deg);border-top-color:#666;border-width:4px 3.500px 0 3.500px"></div>
<div class="sbtn" style="left:1347px;top:613px;width:17px;height:19px"></div>
<div class="sbtn" style="left:1347px;top:806px;width:17px;height:16.500px"></div><div class="dd" style="left:1352.500px;top:813px;border-top-color:#666;border-width:4px 3.500px 0 3.500px"></div>
<svg class="abs" style="left:1350px;top:826px" width="10" height="30" viewBox="0 0 10 30"><path d="M5 1L1.500 5h7zM5 5L1.500 9h7z" fill="#666"/><path d="M5 29l-3.500-4h7zM5 25l-3.500-4h7z" fill="#666"/></svg>
<!-- notes -->
<div class="abs" style="left:238px;top:880px;width:1128px;height:1px;background:#cfcfcf"></div>
<div class="pt" style="left:249px;top:885.500px;font-size:14.800px;line-height:20px;color:#6a6a6a;letter-spacing:.5px">按一下以新增備忘稿</div>
<!-- status bar -->
<div class="abs" style="left:26px;top:914px;width:1340px;height:24px;background:#f1f1f1;border-top:1px solid #d6d6d6"></div>
<div class="pt g" style="left:32px;top:918.500px;font-size:12.400px;letter-spacing:.2px">投影片 26/ 46</div>
<svg class="abs" style="left:123px;top:919.500px" width="16" height="13" viewBox="0 0 16 13"><path d="M7.500 1.500H.5v10h7M7.500 .5v12M7.500 1.500h6.500v3M7.500 11.500h6.500v-2" fill="none" stroke="#777"/><path d="M10.500 4.500l4 4M14.500 4.500l-4 4" stroke="#666" stroke-width="1.200"/></svg>
<div class="pt g" style="left:152.500px;top:917.500px;font-size:12.300px">中文 (台灣)</div>
<svg class="abs" style="left:913px;top:920px" width="11" height="10" viewBox="0 0 11 10"><path d="M0 9h11M1 6h9M2.500 3h6M5.500 0v3" stroke="#666" stroke-width="1.100" fill="none"/></svg>
<div class="pt g" style="left:930px;top:918px;font-size:12.300px">備忘稿</div>
<svg class="abs" style="left:983px;top:919px" width="12" height="12" viewBox="0 0 12 12"><path d="M0 0h12v8.500H6L3 11.500V8.500H0z" fill="#555"/></svg>
<div class="pt g" style="left:1000px;top:918px;font-size:12.300px">註解</div>
<div class="abs" style="left:1045px;top:915px;width:22px;height:21px;background:#cdcdcd"></div>
<svg class="abs" style="left:1049px;top:919px" width="14" height="13" viewBox="0 0 14 13"><rect x=".5" y=".5" width="13" height="12" fill="none" stroke="#777"/><rect x="3" y="3" width="8" height="5" fill="none" stroke="#777"/><path d="M3 10.500h8" stroke="#777"/></svg>
<svg class="abs" style="left:1081px;top:919px" width="13" height="13" viewBox="0 0 13 13"><g fill="none" stroke="#777"><rect x=".5" y=".5" width="5" height="5"/><rect x="7.500" y=".5" width="5" height="5"/><rect x=".5" y="7.500" width="5" height="5"/><rect x="7.500" y="7.500" width="5" height="5"/></g></svg>
<svg class="abs" style="left:1112px;top:919px" width="14" height="13" viewBox="0 0 14 13"><path d="M7 1.500v11M7 1.500C5 .5 2.500 .5.500 1.500v10c2-1 4.500-1 6.500 0M7 1.500c2-1 4.500-1 6.500 0v10c-2-1-4.500-1-6.500 0M2 4h3.500M2 6.500h3.500M8.500 4h3.500M8.500 6.500h3.500M8.500 9h3.500" fill="none" stroke="#777" stroke-width=".9"/></svg>
<svg class="abs" style="left:1144px;top:919px" width="14" height="13" viewBox="0 0 14 13"><path d="M0 .5h14M1.500 .5v7h11v-7M7 7.500v3M4 12.500h6M7 10.500l-2 2M7 10.500l2 2" fill="none" stroke="#777"/></svg>
<div class="abs" style="left:1170px;top:925px;width:7px;height:1.500px;background:#555"></div>
<div class="abs" style="left:1181px;top:925.500px;width:105px;height:1px;background:#a8a8a8"></div>
<div class="abs" style="left:1233px;top:922.500px;width:1px;height:7px;background:#b0b0b0"></div>
<div class="abs" style="left:1211.500px;top:919px;width:3.500px;height:13px;background:#555"></div>
<div class="abs" style="left:1290px;top:925px;width:9px;height:1.500px;background:#555"></div><div class="abs" style="left:1293.700px;top:921px;width:1.500px;height:9px;background:#555"></div>
<div class="pt g" style="left:1311px;top:918px;font-size:12.300px">64%</div>
<svg class="abs" style="left:1347px;top:919px" width="13" height="13" viewBox="0 0 13 13"><rect x=".5" y=".5" width="12" height="12" fill="none" stroke="#777"/><path d="M3 5V3h2M8 3h2v2M10 8v2H8M5 10H3V8" fill="none" stroke="#777"/></svg>

</div>
</div>

<!-- record + people -->
<div class="abs" style="left:1774px;top:156px;width:41px;height:41px;border-radius:50%;background:#28292c"></div>
<svg class="abs" style="left:1783.700px;top:165px" width="21" height="21" viewBox="0 0 21 21"><circle cx="10.500" cy="10.500" r="8.700" fill="none" stroke="#f9b1ad" stroke-width="2.200"/><circle cx="10.500" cy="10.500" r="5.300" fill="#f9b1ad"/></svg>
<div class="abs" style="left:1823px;top:156px;width:80px;height:41px;border-radius:20.500px;background:#28292c"></div>
<svg class="abs" style="left:1829px;top:160px" width="30" height="32" viewBox="0 0 30 32"><defs><clipPath id="m1"><circle cx="9" cy="9.300" r="7.500"/></clipPath><clipPath id="m2"><circle cx="8.500" cy="24" r="4.800"/></clipPath><clipPath id="m3"><circle cx="21" cy="21.800" r="6"/></clipPath></defs><circle cx="9" cy="9.300" r="7.500" fill="#fbeedd"/><g clip-path="url(#m1)"><path d="M5 6h8.500v6l1 5H6.500L6 12 4.500 10.500z" fill="#b3b7bc"/><rect x="5" y="4.500" width="8.500" height="2" fill="#36383b"/><path d="M1 15c5 3 11 3 16-1v4H1z" fill="#f9b9b6"/></g><circle cx="8.500" cy="24" r="4.800" fill="#fbeedd"/><g clip-path="url(#m2)"><path d="M6 22h5.500v4l.6 3H7L6.600 26 5.700 25z" fill="#b3b7bc"/><rect x="6" y="21" width="5.500" height="1.300" fill="#36383b"/><path d="M3 27.500c3 2 8 2 11-1v3H3z" fill="#f9b9b6"/></g><circle cx="22" cy="9.500" r="4" fill="#3f7de6"/><circle cx="22" cy="8.300" r="1.500" fill="#8ab4f8"/><path d="M19.300 11.800a2.800 2.300 0 0 1 5.400 0z" fill="#8ab4f8"/><circle cx="21" cy="21.800" r="6" fill="#7a5846"/><g clip-path="url(#m3)"><circle cx="23.500" cy="20" r="4.500" fill="#1a0f0a"/><ellipse cx="21.800" cy="22" rx="2.500" ry="2.800" fill="#e2b08e"/><path d="M15 25c3-1.500 8-.5 12 1v3H15z" fill="#77744c"/></g></svg>
<div class="abs" style="left:1868.500px;top:168px;font-size:13.300px;font-weight:bold;color:#e3e3e3;line-height:16px;letter-spacing:-.2px">123</div>

<!-- row 1 -->
<div class="abs" style="left:1387px;top:241px;width:167px;height:222px;border-radius:18.500px;background:#f8b684"></div>
<div class="tile" style="left:1390px;top:244px;width:161px;background:radial-gradient(ellipse at 50% 50%,#5c3b22 0%,#4e301a 60%,#422511 100%)">
 <div class="abs" style="left:35px;top:62px;width:93px;height:93px;border-radius:50%;background:#6e4a30"></div>
 <div class="abs" style="left:40px;top:67px;width:83px;height:83px;border-radius:50%;background:#f6b583"></div>
 <div class="abs" style="left:41.500px;top:68.500px;width:80px;height:80px;border-radius:50%;overflow:hidden;background:#8a6858"><svg width="80" height="80" viewBox="0 0 82 82"><defs><filter id="bl" x="-10%" y="-10%" width="120%" height="120%"><feGaussianBlur stdDeviation=".9"/></filter><linearGradient id="bg0" x1="0" y1="0" x2=".3" y2="1"><stop offset="0" stop-color="#7a5948"/><stop offset=".5" stop-color="#93705f"/><stop offset="1" stop-color="#a98878"/></linearGradient></defs><g filter="url(#bl)"><rect x="-4" y="-4" width="90" height="90" fill="url(#bg0)"/><path d="M-2 52L14 50 10 70-2 70z" fill="#2a1916"/><path d="M32 42C30 24 42 8 60 8 74 8 86 20 86 40V70H62C66 60 66 50 62 44L40 40C36 44 34 52 33 56z" fill="#1a0f0a"/><path d="M34 44C34 36 44 30 52 32 62 34 68 42 66 52 64 60 56 66 48 64 40 62 33 58 33 52z" fill="#e9b48c"/><path d="M33 46C33 42 36 38 40 38L42 50 41 60 34 58z" fill="#f4d2ad"/><path d="M40 22C46 18 56 18 64 24L66 44 60 38 54 40 50 30 44 40 38 40z" fill="#3a2216"/><path d="M42 24l4 12M48 22l3 14M54 24l2 10" stroke="#9a6a44" stroke-width="2.500" opacity=".8"/><ellipse cx="39" cy="41.500" rx="2.600" ry="1.500" fill="#2a1710"/><ellipse cx="54" cy="41" rx="3" ry="1.600" fill="#2a1710"/><ellipse cx="43.500" cy="57" rx="2.600" ry="1.300" fill="#c4564a"/><path d="M4 58C12 52 24 52 32 55 38 60 44 64 52 64 60 62 68 58 74 64L78 90H0z" fill="#77744c"/><path d="M36 66C44 62 52 66 60 64L70 90H30z" fill="#5f5d3a"/><path d="M8 60c6-3 14-3 20-1" stroke="#8f8c62" stroke-width="3" fill="none"/></g></svg></div>
 <div class="tname">Li Shang-Jen...</div>
</div>
<div class="tile" style="left:1565px;top:244px;background:radial-gradient(ellipse at 50% 50%,#5d5334 0%,#4d442b 60%,#3b341f 100%)">
 <div class="mute" style="background:#3f3c0d"><svg class="abs" style="left:6.500px;top:6px" width="14" height="15" viewBox="0 0 14 15"><path d="M7 1.300a1.900 1.900 0 0 1 1.900 1.900v3.600A1.900 1.900 0 0 1 7 8.700 1.900 1.900 0 0 1 5.100 6.800V3.200A1.900 1.900 0 0 1 7 1.300z" fill="#e6e08a"/><path d="M3 6.800a4 4 0 0 0 8 0M7 10.800v2.700" fill="none" stroke="#e6e08a" stroke-width="1.300" stroke-linecap="round"/><path d="M1.800 1.200l10.600 12.300" stroke="#e6e08a" stroke-width="1.400" stroke-linecap="round"/></svg></div>
 <div class="av" style="background:#878783"><svg width="82" height="82" viewBox="0 0 82 82"><defs><filter id="bl2" x="-10%" y="-10%" width="120%" height="120%"><feGaussianBlur stdDeviation=".7"/></filter><linearGradient id="bg1" x1="0" y1="0" x2=".2" y2="1"><stop offset="0" stop-color="#9b9b96"/><stop offset=".5" stop-color="#8b8b86"/><stop offset="1" stop-color="#7b7b77"/></linearGradient></defs><g filter="url(#bl2)"><rect x="-4" y="-4" width="90" height="90" fill="url(#bg1)"/><path d="M10 20C24 10 40 14 50 8M50 30C62 34 70 44 80 44M6 40C16 36 22 30 30 30" stroke="#a3a39e" stroke-width="5" fill="none" opacity=".5"/><path d="M1 52C10 46 20 40 29 38L34 40C30 44 27 48 27 52L36 60 57 48C61 46.500 63 50 59 52L50 58C56 54.500 62 53 63 55 64 57.500 56 62 46 67 42 72 36 78 30 81 18 77 6 66 1 52z" fill="#e9c4aa"/><path d="M2 54C10 52 18 54 22 60 26 66 24 72 20 74 10 68 4 62 2 54z" fill="#f3d6c2" opacity=".8"/><circle cx="39" cy="27.600" r="11.300" fill="#df2514"/><circle cx="39" cy="27.600" r="8.300" fill="#f39a1f"/><rect x="32.700" y="22.300" width="11.800" height="12" rx="2" fill="#ebe6e0"/><rect x="36" y="25.300" width="1.700" height="5.700" rx=".8" fill="#151515"/><rect x="40.600" y="25.300" width="1.700" height="5.700" rx=".8" fill="#151515"/><ellipse cx="38" cy="42" rx="13" ry="4.600" fill="#45b11f"/><ellipse cx="34" cy="41" rx="4" ry="2" fill="#7bd63a"/><path d="M28 47L50 42.600 52 54 37.600 62.500 28.400 57z" fill="#f4a61b"/><path d="M28 47L50 42.600 39 49.500z" fill="#f8c04a"/><path d="M37.600 62.500L39 49.500" stroke="#e08e10" stroke-width=".8"/><path d="M41.500 50.500C43 47.500 48 47 48.500 49.500 49 52 45.500 52 45.500 54.500M45.700 57v1.500" stroke="#f6f1ea" stroke-width="2" fill="none"/><path d="M32 50v5M32 57.500v1" stroke="#f6f1ea" stroke-width="1.800"/></g></svg></div>
 <div class="tname"><span style="font-size:18.200px;position:relative;top:1px">蘇靜綸</span></div>
</div>
<div class="tile" style="left:1740px;top:244px;background:radial-gradient(ellipse at 50% 50%,#9c4c1d 0%,#843c15 55%,#63290c 100%)">
 <div class="mute" style="background:#5a2409"><svg class="abs" style="left:6.500px;top:6px" width="14" height="15" viewBox="0 0 14 15"><path d="M7 1.300a1.900 1.900 0 0 1 1.900 1.900v3.600A1.900 1.900 0 0 1 7 8.700 1.900 1.900 0 0 1 5.100 6.800V3.200A1.900 1.900 0 0 1 7 1.300z" fill="#f2b89a"/><path d="M3 6.800a4 4 0 0 0 8 0M7 10.800v2.700" fill="none" stroke="#f2b89a" stroke-width="1.300" stroke-linecap="round"/><path d="M1.800 1.200l10.600 12.300" stroke="#f2b89a" stroke-width="1.400" stroke-linecap="round"/></svg></div>
 <div class="av" style="background:#f96e22;color:#fff;text-align:center;font-size:43.500px;line-height:82px;font-weight:normal">Y</div>
 <div class="tname">Yenko Lin</div>
</div>
<!-- row 2 -->
<div class="tile" style="left:1390px;top:473.500px;width:161px;background:radial-gradient(ellipse at 50% 50%,#6b419c 0%,#59348a 55%,#452470 100%)">
 <div class="mute" style="background:#3f178f"><svg class="abs" style="left:6.500px;top:6px" width="14" height="15" viewBox="0 0 14 15"><path d="M7 1.300a1.900 1.900 0 0 1 1.900 1.900v3.600A1.900 1.900 0 0 1 7 8.700 1.900 1.900 0 0 1 5.100 6.800V3.200A1.900 1.900 0 0 1 7 1.300z" fill="#d9c6f5"/><path d="M3 6.800a4 4 0 0 0 8 0M7 10.800v2.700" fill="none" stroke="#d9c6f5" stroke-width="1.300" stroke-linecap="round"/><path d="M1.800 1.200l10.600 12.300" stroke="#d9c6f5" stroke-width="1.400" stroke-linecap="round"/></svg></div>
 <div class="av" style="background:#7e57c2;color:#fff;text-align:center;font-size:33px;line-height:80px;letter-spacing:0">佩穎</div>
 <div class="tname"><span style="font-size:18.200px;position:relative;top:1px">呂佩穎</span></div>
</div>
<div class="tile" style="left:1565px;top:473.500px;background:radial-gradient(ellipse at 50% 50%,#766a4f 0%,#645940 55%,#4b412e 100%)">
 <div class="mute" style="background:#4f3a08"><svg class="abs" style="left:6.500px;top:6px" width="14" height="15" viewBox="0 0 14 15"><path d="M7 1.300a1.900 1.900 0 0 1 1.900 1.900v3.600A1.900 1.900 0 0 1 7 8.700 1.900 1.900 0 0 1 5.100 6.800V3.200A1.900 1.900 0 0 1 7 1.300z" fill="#f0d48a"/><path d="M3 6.800a4 4 0 0 0 8 0M7 10.800v2.700" fill="none" stroke="#f0d48a" stroke-width="1.300" stroke-linecap="round"/><path d="M1.800 1.200l10.600 12.300" stroke="#f0d48a" stroke-width="1.400" stroke-linecap="round"/></svg></div>
 <div class="av"><svg width="82" height="82" viewBox="0 0 82 82"><defs><linearGradient id="hg1" x1="0" y1="0" x2="0" y2="1"><stop offset="0" stop-color="#fdeccb"/><stop offset=".35" stop-color="#fdf0d9"/><stop offset=".7" stop-color="#fde3d6"/><stop offset="1" stop-color="#f9b9b6"/></linearGradient></defs><rect width="82" height="82" fill="url(#hg1)"/><path d="M0 22C8 18 16 20 21 24 16 34 12 44 6 54L0 56z" fill="#fff" opacity=".9"/><path d="M0 70C22 78 52 70 82 52V82H0z" fill="#f99b9c" opacity=".75"/><path d="M30 82C50 76 68 66 82 54V82z" fill="#fcd3cf" opacity=".8"/><path d="M22 28H60.500C61.500 36 61.500 44 60 51 58.500 56 58 60 60 63.500L37.600 72C37 67 36 63.500 33 62 29 61 25 61 23 59.300 22 58 22.500 56 22 54.500 20.500 54 20.500 52.500 21.300 51.500 19 50.500 17.500 48.500 17.200 47.200 19 44.500 20.500 42 21 39 21 35 21.300 31 22 28z" fill="#b3b7bc"/><path d="M52 30C58 34 61 44 59 56 61 48 61.500 38 60.500 28z" fill="#9ea2a8" opacity=".6"/><ellipse cx="41.200" cy="27.500" rx="19.300" ry="4" fill="#36383b"/><path d="M25 26C24 18 28 14 32 14 36 14 38 18 37 22 42 21 50 22 58 25L57 29H26z" fill="#2f3134"/><circle cx="31.500" cy="19.500" r="6" fill="#6a6d71"/><circle cx="32.500" cy="19.500" r="3.500" fill="#3a3c3f"/><circle cx="32.500" cy="19.500" r="1.600" fill="#8d9094"/><rect x="50.500" y="6" width="3.400" height="19" fill="#55585c"/><rect x="49.800" y="4.500" width="4.800" height="2.500" rx="1" fill="#3a3c3f"/><path d="M34 7l1.500 6 1.500-5 1.500 5 1.500-5 1.500 5 1.500-5 1.500 5L46 7" fill="none" stroke="#5a5648" stroke-width=".9"/><path d="M49.500 37.500C53 36.500 53.500 41 52 45 50.500 49 47.500 52 45 51 43.500 50 45 48 45 46 44.500 42 46 38.500 49.500 37.500z" fill="#a4a8ad" stroke="#8b8f94" stroke-width=".8"/><path d="M47 41c2-2 4-1 3.500 2" fill="none" stroke="#7d8186" stroke-width=".8"/><path d="M37.600 71.500L60.800 62.500 67 73 60 82H38z" fill="#26282b"/></svg></div>
 <div class="tname"><span style="font-size:18.200px;position:relative;top:1px">醫學教育學門</span>...</div>
</div>
<div class="tile" style="left:1740.500px;top:473.500px;width:161.500px;height:215px;background:#d9d9d9">
 <div class="abs" style="left:0;top:0;width:162px;height:14px;background:#e8edf5"></div>
 <div class="abs" style="left:4px;top:3px;font-size:5px;line-height:7px;color:#9aa3ad;white-space:nowrap;transform-origin:0 0">meet.google.com/cwp-dixa-jha</div>
 <div class="abs" style="left:0;top:13.500px;width:162px;height:28px;background:#131517"></div>
 <div class="abs" style="left:0;top:18px;width:162px;height:12px;background:#2f3336"></div>
 <div class="abs" style="left:0;top:40.500px;width:162px;height:13px;background:linear-gradient(180deg,#c5532d,#d2602f)"></div>
 <div class="abs" style="left:0;top:53px;width:162px;height:19.500px;background:#e9e6e4"></div>
 <div class="abs" style="left:4px;top:57px;width:125px;height:11px;background:repeating-linear-gradient(90deg,#d4d0ce 0 9px,#e9e6e4 9px 16px);opacity:.8"></div>
 <div class="abs" style="left:51px;top:57px;width:24px;height:12px;background:#f7f7f7;opacity:.9"></div>
 <div class="abs" style="left:113.500px;top:72px;width:50px;height:100px;background:#d9d9d9"></div>
 <div class="abs" style="left:-16.800px;top:74px;width:131px;height:98px;overflow:hidden;filter:blur(.6px)"><div style="transform:scale(.2029);transform-origin:0 0;width:642px;height:481px;position:relative"><div class="slide serif"><div class="deco2"></div><div class="deco1"></div><div class="stitle">牛痘的興起</div><div class="sline"></div><div class="sbul" style="top:143px"></div><div class="sbody" style="top:134px">英國一般科醫師簡納(Edward Jenner, 1749-<br>1823)發現，擠牛奶女工有時會受到感染牛<br>痘的牛隻傳染，手上出現瘡疤，但這會讓她<br>們免於感染天花。之前已經有農夫試著接種<br>牛痘來預防天花，簡納則在1796年對此進行<br>實驗，取出牛奶女工的牛痘，接種在從未感<br>染過天花的男孩身上。六週後再對男孩接種<br>天花，結果男孩沒有感染天花。</div><div class="abs" style="left:590px;top:454px;font-size:11.500px;line-height:14px;color:#333;font-family:'Liberation Sans',sans-serif">26</div></div></div></div>
 <div class="abs" style="left:0;top:171.500px;width:162px;height:15px;background:#dcdcdc"></div>
 <div class="abs" style="left:0;top:186px;width:162px;height:30px;background:#141414"></div>
 <div class="abs" style="left:7px;top:196.500px;width:14.500px;height:16px;border-radius:4px;background:#f3c8c4"></div>
 <div class="abs" style="left:36px;top:198px;width:12px;height:13px;border-radius:6px;background:#3a3c3f"></div><div class="abs" style="left:54.5px;top:198px;width:12px;height:13px;border-radius:6px;background:#3a3c3f"></div><div class="abs" style="left:73.5px;top:198px;width:12px;height:13px;border-radius:6px;background:#3a3c3f"></div><div class="abs" style="left:93px;top:198px;width:12px;height:13px;border-radius:6px;background:#3a3c3f"></div><div class="abs" style="left:113px;top:198px;width:12px;height:13px;border-radius:6px;background:#3a3c3f"></div><div class="abs" style="left:133px;top:198px;width:5px;height:13px;border-radius:2.500px;background:#3a3c3f"></div>
 <div class="abs" style="left:143.500px;top:196px;width:20px;height:17px;border-radius:8.500px 0 0 8.500px;background:#e23b34"></div>
 <div class="mute" style="background:rgba(60,64,67,.85)"><svg class="abs" style="left:6.500px;top:6px" width="14" height="15" viewBox="0 0 14 15"><path d="M7 1.300a1.900 1.900 0 0 1 1.900 1.900v3.600A1.900 1.900 0 0 1 7 8.700 1.900 1.900 0 0 1 5.100 6.800V3.200A1.900 1.900 0 0 1 7 1.300z" fill="#d5d7da"/><path d="M3 6.800a4 4 0 0 0 8 0M7 10.800v2.700" fill="none" stroke="#d5d7da" stroke-width="1.300" stroke-linecap="round"/><path d="M1.800 1.200l10.600 12.300" stroke="#d5d7da" stroke-width="1.400" stroke-linecap="round"/></svg></div>
 <div class="tname" style="text-shadow:0 0 3px #000,0 0 2px #000"><span style="font-size:18.200px;position:relative;top:1px">醫學人文與教</span>...</div>
</div>
<!-- row 3 -->
<div class="tile" style="left:1390px;top:703px;width:161px;background:radial-gradient(ellipse at 50% 50%,#3764a3 0%,#2c5394 55%,#1c3f7d 100%)">
 <div class="mute" style="background:#0b3287"><svg class="abs" style="left:6.500px;top:6px" width="14" height="15" viewBox="0 0 14 15"><path d="M7 1.300a1.900 1.900 0 0 1 1.900 1.900v3.600A1.900 1.900 0 0 1 7 8.700 1.900 1.900 0 0 1 5.100 6.800V3.200A1.900 1.900 0 0 1 7 1.300z" fill="#c9dcfa"/><path d="M3 6.800a4 4 0 0 0 8 0M7 10.800v2.700" fill="none" stroke="#c9dcfa" stroke-width="1.300" stroke-linecap="round"/><path d="M1.800 1.200l10.600 12.300" stroke="#c9dcfa" stroke-width="1.400" stroke-linecap="round"/></svg></div>
 <div class="av" style="background:#9cc2fb">
  <div class="abs" style="left:26px;top:17px;width:30px;height:30px;border-radius:50%;background:#3a78e0"></div>
  <div class="abs" style="left:15px;top:54px;width:52px;height:40px;border-radius:16px 16px 0 0;background:#3a78e0"></div>
 </div>
 <div class="tname"><span style="font-size:18.200px;position:relative;top:1px">高醫大深耕計</span>...</div>
</div>
<div class="tile" style="left:1565px;top:703px;background:#333537">
 <div class="abs" style="left:36px;top:50px;width:47px;height:47px;border-radius:50%;overflow:hidden;background:#d9dde0;border:1.500px solid #f1f3f4">
  <div class="abs" style="left:9px;top:0;width:28px;height:14px;border-radius:40% 40% 0 0;background:#1c1c1c"></div>
  <div class="abs" style="left:11px;top:9px;width:24px;height:12px;background:#dcb9a0"></div>
  <div class="abs" style="left:11px;top:18px;width:24px;height:14px;border-radius:0 0 45% 45%;background:#f4f4f4"></div>
  <div class="abs" style="left:0;top:32px;width:47px;height:15px;background:#35c3e3"></div>
 </div>
 <div class="abs" style="left:81px;top:50px;width:48px;height:48px;border-radius:50%;background:#01579b;color:#fff;font-size:19.500px;line-height:46px;text-align:center">頎晉</div>
 <div class="abs" style="left:0;top:113.500px;width:168px;font-size:17.700px;font-weight:bold;color:#fff;line-height:27px;letter-spacing:-.1px">還有另外 114 位使用者</div>
</div>
<div class="tile" style="left:1740px;top:703px;background:radial-gradient(ellipse at 50% 50%,#766a4f 0%,#645940 55%,#4b412e 100%)">
 <div class="mute" style="background:#4f3a08"><svg class="abs" style="left:6.500px;top:6px" width="14" height="15" viewBox="0 0 14 15"><path d="M7 1.300a1.900 1.900 0 0 1 1.900 1.900v3.600A1.900 1.900 0 0 1 7 8.700 1.900 1.900 0 0 1 5.100 6.800V3.200A1.900 1.900 0 0 1 7 1.300z" fill="#f0d48a"/><path d="M3 6.800a4 4 0 0 0 8 0M7 10.800v2.700" fill="none" stroke="#f0d48a" stroke-width="1.300" stroke-linecap="round"/><path d="M1.800 1.200l10.600 12.300" stroke="#f0d48a" stroke-width="1.400" stroke-linecap="round"/></svg></div>
 <div class="av"><svg width="82" height="82" viewBox="0 0 82 82"><defs><linearGradient id="hg2" x1="0" y1="0" x2="0" y2="1"><stop offset="0" stop-color="#fdeccb"/><stop offset=".35" stop-color="#fdf0d9"/><stop offset=".7" stop-color="#fde3d6"/><stop offset="1" stop-color="#f9b9b6"/></linearGradient></defs><rect width="82" height="82" fill="url(#hg2)"/><path d="M0 22C8 18 16 20 21 24 16 34 12 44 6 54L0 56z" fill="#fff" opacity=".9"/><path d="M0 70C22 78 52 70 82 52V82H0z" fill="#f99b9c" opacity=".75"/><path d="M30 82C50 76 68 66 82 54V82z" fill="#fcd3cf" opacity=".8"/><path d="M22 28H60.500C61.500 36 61.500 44 60 51 58.500 56 58 60 60 63.500L37.600 72C37 67 36 63.500 33 62 29 61 25 61 23 59.300 22 58 22.500 56 22 54.500 20.500 54 20.500 52.500 21.300 51.500 19 50.500 17.500 48.500 17.200 47.200 19 44.500 20.500 42 21 39 21 35 21.300 31 22 28z" fill="#b3b7bc"/><path d="M52 30C58 34 61 44 59 56 61 48 61.500 38 60.500 28z" fill="#9ea2a8" opacity=".6"/><ellipse cx="41.200" cy="27.500" rx="19.300" ry="4" fill="#36383b"/><path d="M25 26C24 18 28 14 32 14 36 14 38 18 37 22 42 21 50 22 58 25L57 29H26z" fill="#2f3134"/><circle cx="31.500" cy="19.500" r="6" fill="#6a6d71"/><circle cx="32.500" cy="19.500" r="3.500" fill="#3a3c3f"/><circle cx="32.500" cy="19.500" r="1.600" fill="#8d9094"/><rect x="50.500" y="6" width="3.400" height="19" fill="#55585c"/><rect x="49.800" y="4.500" width="4.800" height="2.500" rx="1" fill="#3a3c3f"/><path d="M34 7l1.500 6 1.500-5 1.500 5 1.500-5 1.500 5 1.500-5 1.500 5L46 7" fill="none" stroke="#5a5648" stroke-width=".9"/><path d="M49.500 37.500C53 36.500 53.500 41 52 45 50.500 49 47.500 52 45 51 43.500 50 45 48 45 46 44.500 42 46 38.500 49.500 37.500z" fill="#a4a8ad" stroke="#8b8f94" stroke-width=".8"/><path d="M47 41c2-2 4-1 3.500 2" fill="none" stroke="#7d8186" stroke-width=".8"/><path d="M37.600 71.500L60.800 62.500 67 73 60 82H38z" fill="#26282b"/></svg></div>
 <div class="tname"><span style="font-size:18.200px;position:relative;top:1px">醫學教育學</span>...</div>
</div>

<!-- bottom bar -->
<div class="abs" style="left:27.500px;top:976px;font-size:18.400px;font-weight:bold;color:#fff;line-height:24px;white-space:nowrap">上午<span style="font-size:16.800px;letter-spacing:-.5px">11:07</span></div>
<div class="abs" style="left:118.500px;top:979px;width:1.500px;height:18px;background:#c4c7c5"></div>
<div class="abs" style="left:133px;top:976px;font-size:18.400px;font-weight:bold;color:#fff;line-height:24px;white-space:nowrap;letter-spacing:-.2px">南杏講座線上講座 (李尚仁教授)</div>
<div class="abs" style="left:400px;top:971px;width:36px;height:36px;border-radius:13px;background:#5b2a12"></div>
<svg class="abs" style="left:409px;top:979px" width="18" height="20" viewBox="0 0 18 20"><path d="M1 18h16M3.500 18V2.500h8V18M11.500 5.500h3V18" fill="none" stroke="#fbe4d6" stroke-width="2"/><rect x="8" y="9.500" width="2" height="2.500" fill="#fbe4d6"/></svg>
<!-- mic group -->
<div class="abs" style="left:642px;top:962px;width:99px;height:54px;border-radius:27px;background:#28292c"></div>
<svg class="abs" style="left:662px;top:985px" width="12" height="8" viewBox="0 0 12 8"><path d="M1.500 6.500L6 2l4.500 4.500" fill="none" stroke="#9aa0a6" stroke-width="1.800" stroke-linecap="round" stroke-linejoin="round"/></svg>
<div class="abs" style="left:687px;top:962px;width:54px;height:54px;border-radius:15px;background:#fadcd9"></div>
<svg class="abs" style="left:702px;top:976px" width="24" height="27" viewBox="0 0 24 27"><path d="M12 3a3.200 3.200 0 0 1 3.200 3.200v6.500a3.200 3.200 0 0 1-6.400 0V6.200A3.200 3.200 0 0 1 12 3z" fill="none" stroke="#601410" stroke-width="2"/><path d="M5.500 12.500a6.500 6.500 0 0 0 13 0M12 19v4.500" fill="none" stroke="#601410" stroke-width="2" stroke-linecap="round"/><path d="M3 3l18 21" stroke="#fadcd9" stroke-width="5"/><path d="M3.500 3.500l17 20" stroke="#601410" stroke-width="2" stroke-linecap="round"/></svg>
<!-- cam group -->
<div class="abs" style="left:750px;top:962px;width:100px;height:54px;border-radius:27px;background:#28292c"></div>
<svg class="abs" style="left:770px;top:985px" width="12" height="8" viewBox="0 0 12 8"><path d="M1.500 6.500L6 2l4.500 4.500" fill="none" stroke="#9aa0a6" stroke-width="1.800" stroke-linecap="round" stroke-linejoin="round"/></svg>
<div class="abs" style="left:796px;top:962px;width:54px;height:54px;border-radius:15px;background:#fadcd9"></div>
<svg class="abs" style="left:810px;top:977px" width="26" height="24" viewBox="0 0 26 24"><path d="M3 5h14v14H3z" fill="none" stroke="#601410" stroke-width="2.200" stroke-linejoin="round"/><path d="M17 10l6-4.500v13L17 14z" fill="#601410"/><path d="M1.500 1.500l21 21" stroke="#fadcd9" stroke-width="5.500"/><path d="M2 2l20.500 20.500" stroke="#601410" stroke-width="2.200" stroke-linecap="round"/></svg>
<!-- share -->
<div class="abs" style="left:859px;top:962px;width:63px;height:54px;border-radius:27px;background:#333537"></div>
<svg class="abs" style="left:877px;top:978px" width="27" height="22" viewBox="0 0 27 22"><rect x="3" y="1.500" width="21" height="14.500" rx="1.500" fill="none" stroke="#e3e3e3" stroke-width="2.200"/><path d="M0 20h27" stroke="#e3e3e3" stroke-width="2.200"/><path d="M13.500 13V7.500M10 9l3.500-3.500L17 9z" fill="#e3e3e3" stroke="#e3e3e3" stroke-width="1.800" stroke-linejoin="round"/></svg>
<!-- emoji -->
<div class="abs" style="left:931px;top:962px;width:63px;height:54px;border-radius:27px;background:#333537"></div>
<svg class="abs" style="left:950px;top:977px" width="25" height="25" viewBox="0 0 25 25"><circle cx="12.500" cy="12.500" r="10.500" fill="none" stroke="#e3e3e3" stroke-width="2.200"/><circle cx="8.700" cy="9.800" r="1.700" fill="#e3e3e3"/><circle cx="16.300" cy="9.800" r="1.700" fill="#e3e3e3"/><path d="M6.500 14h12a6 6 0 0 1-12 0z" fill="#e3e3e3"/></svg>
<!-- cc -->
<div class="abs" style="left:1003px;top:962px;width:63px;height:54px;border-radius:27px;background:#333537"></div>
<svg class="abs" style="left:1023px;top:979px" width="23" height="20" viewBox="0 0 23 20"><rect x="1.200" y="1.200" width="20.600" height="17.600" rx="1.500" fill="none" stroke="#e3e3e3" stroke-width="2.400"/><path d="M10 8.300H7.800a1 1 0 0 0-1 1v1.400a1 1 0 0 0 1 1H10M16.500 8.300h-2.200a1 1 0 0 0-1 1v1.400a1 1 0 0 0 1 1h2.200" fill="none" stroke="#e3e3e3" stroke-width="2"/></svg>
<!-- hand -->
<div class="abs" style="left:1076px;top:962px;width:63px;height:54px;border-radius:27px;background:#333537"></div>
<svg class="abs" style="left:1094px;top:975px" width="26" height="29" viewBox="0 0 26 29"><path d="M8 15V5.500a1.600 1.600 0 0 1 3.200 0V13M11.200 13V3a1.600 1.600 0 0 1 3.200 0v10M14.400 13V4.500a1.600 1.600 0 0 1 3.200 0V14M17.600 14V8a1.600 1.600 0 0 1 3.200 0v10.500c0 5-3.500 8.500-8 8.500-3.500 0-5.800-1.800-7.400-4.800L2.200 16c-.5-1 .1-2 1.100-2.200 1-.2 1.800.3 2.400 1.300L8 18.500" fill="none" stroke="#e3e3e3" stroke-width="2.200" stroke-linecap="round" stroke-linejoin="round"/></svg>
<!-- more -->
<div class="abs" style="left:1148px;top:962px;width:41px;height:54px;border-radius:20.500px;background:#333537"></div>
<svg class="abs" style="left:1165px;top:978px" width="6" height="22" viewBox="0 0 6 22"><circle cx="3" cy="3" r="2.400" fill="#e3e3e3"/><circle cx="3" cy="11" r="2.400" fill="#e3e3e3"/><circle cx="3" cy="19" r="2.400" fill="#e3e3e3"/></svg>
<!-- hangup -->
<div class="abs" style="left:1198px;top:962px;width:81px;height:54px;border-radius:27px;background:#e33834"></div>
<svg class="abs" style="left:1225px;top:983px" width="27" height="12" viewBox="0 0 27 12"><path d="M13.500 1.500c-4.500 0-9 1.400-12 4.300-.6.600-.6 1.400 0 2l2.200 2.200c.5.500 1.300.6 1.900.2l2.800-1.900c.4-.3.600-.7.600-1.200V5.200c2.900-.9 6.100-.9 9 0v1.900c0 .5.200.9.600 1.200l2.800 1.900c.6.400 1.400.3 1.900-.2l2.200-2.200c.6-.6.600-1.400 0-2-3-2.900-7.500-4.300-12-4.300z" fill="#fff"/></svg>
<!-- right icons -->
<svg class="abs" style="left:1705px;top:977px" width="25" height="25" viewBox="0 0 25 25"><circle cx="12.500" cy="12.500" r="10.500" fill="none" stroke="#fff" stroke-width="2.200"/><rect x="11.300" y="11" width="2.400" height="7" fill="#fff"/><circle cx="12.500" cy="7.700" r="1.500" fill="#fff"/></svg>
<svg class="abs" style="left:1739px;top:956px" width="67" height="67" viewBox="0 0 67 67"><circle cx="33.200" cy="33.400" r="30.900" fill="none" stroke="#68c1f3" stroke-width="3.800"/></svg>
<svg class="abs" style="left:1759px;top:977px" width="26" height="25" viewBox="0 0 26 25"><path d="M2 2h22v16.500H7L2 23z" fill="none" stroke="#fff" stroke-width="2.400" stroke-linejoin="round"/><path d="M6.500 7.700h13M6.500 12.300h9" stroke="#fff" stroke-width="2.600"/></svg>
<svg class="abs" style="left:1816px;top:979px" width="20" height="20" viewBox="0 0 20 20"><g fill="#fff"><circle cx="3" cy="3" r="2.500"/><circle cx="10" cy="3" r="2.500"/><circle cx="17" cy="3" r="2.500"/><circle cx="3" cy="10" r="2.500"/><circle cx="10" cy="10" r="2.500"/><circle cx="17" cy="10" r="2.500"/><circle cx="3" cy="17" r="2.500"/><circle cx="10" cy="17" r="2.500"/><circle cx="17" cy="17" r="2.500"/></g></svg>
<svg class="abs" style="left:1869px;top:976px" width="24" height="27" viewBox="0 0 24 27"><path d="M6 10V6.500a4.500 4.500 0 0 1 9 0V10" fill="none" stroke="#fff" stroke-width="2.400"/><path d="M11 23.500H2.500v-13h16V14" fill="none" stroke="#fff" stroke-width="2.400" stroke-linejoin="round"/><circle cx="17.500" cy="20.500" r="6" fill="#fff"/><circle cx="17.500" cy="18.800" r="1.600" fill="#131314"/><path d="M14.300 23.400a3.600 3.600 0 0 1 6.400 0z" fill="#131314"/></svg>
<!-- tooltip -->
<div class="abs" style="left:1694px;top:930px;width:155px;height:27px;border-radius:4px;background:#303134;color:#e3e3e3;font-size:13.600px;font-weight:500;line-height:27px;text-align:center;white-space:nowrap">與所有參與者即時通訊</div>

</body>
</html>
